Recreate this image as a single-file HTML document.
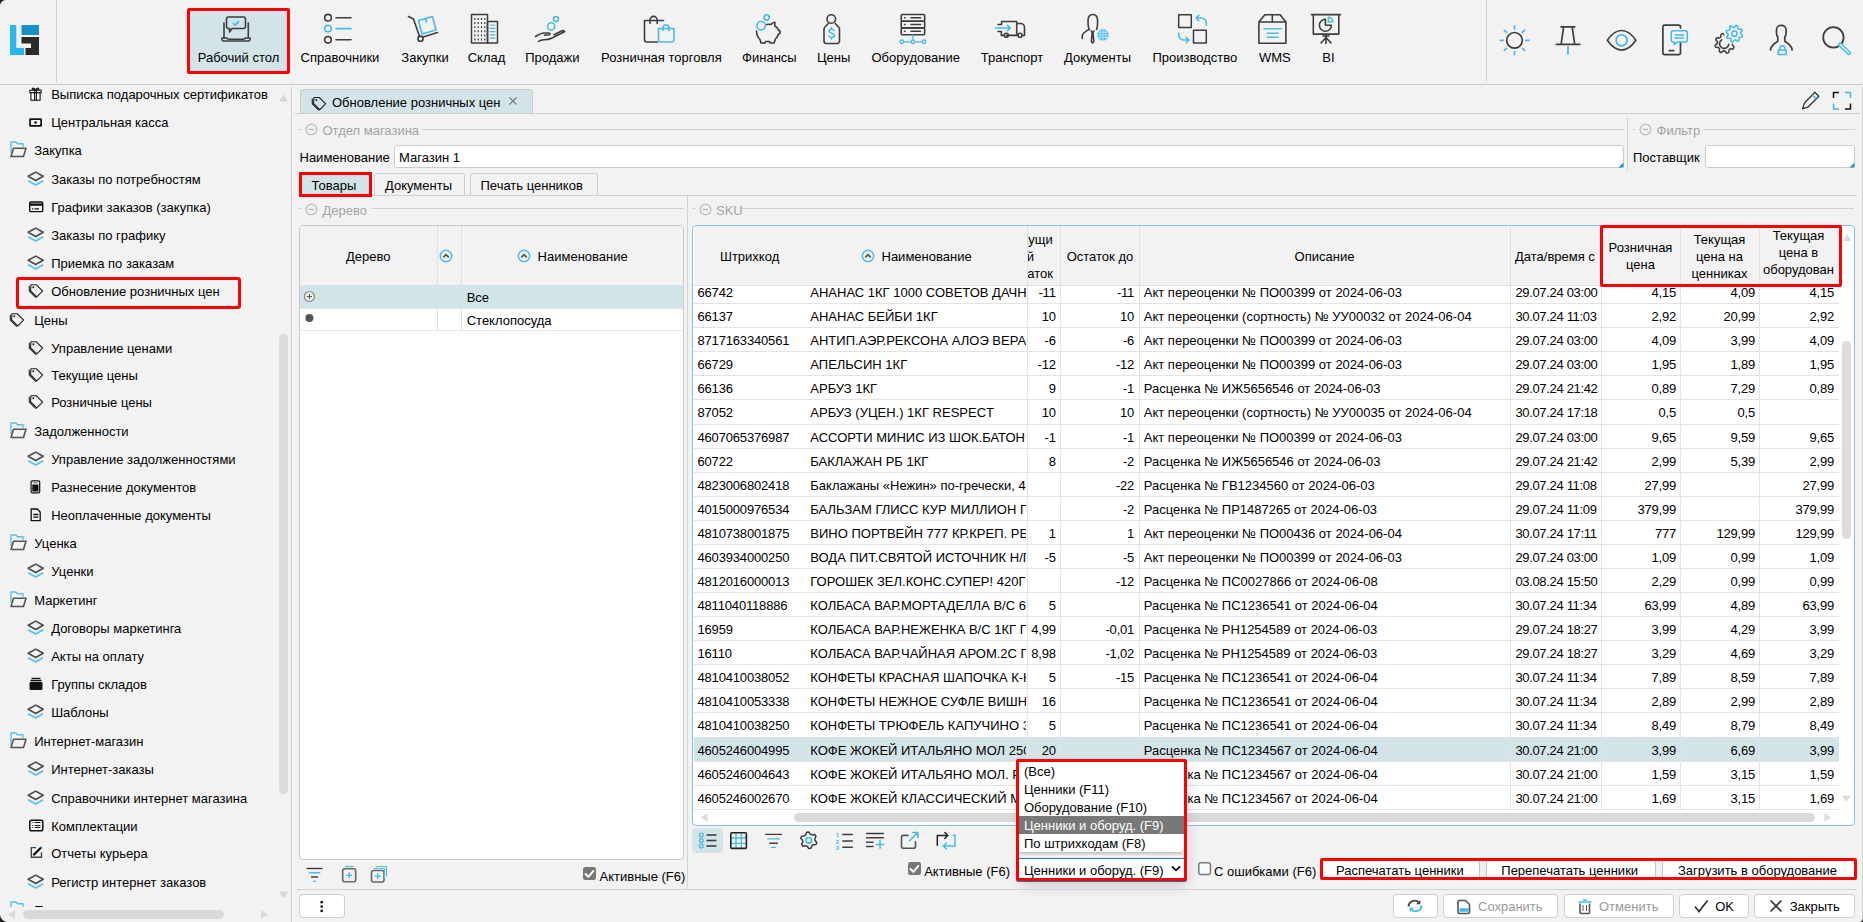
<!DOCTYPE html>
<html><head><meta charset="utf-8"><title>Обновление розничных цен</title>
<style>
html,body{margin:0;padding:0;}
body{width:1863px;height:922px;overflow:hidden;position:relative;background:#f2f2f2;font-family:"Liberation Sans",sans-serif;font-size:13px;color:#000;}
.a{position:absolute;}
.t{position:absolute;line-height:16px;white-space:nowrap;}
.g{color:#a3a3a3;}
.clip{position:absolute;overflow:hidden;}
svg{overflow:visible}
</style></head><body>

<div class="a" style="left:0;top:0;width:6px;height:6px;background:radial-gradient(circle at 6px 6px, rgba(34,34,34,0) 5.5px, #222 6.5px)"></div>
<svg class="a" style="left:0;top:0" width="56" height="84"><rect x="10" y="25" width="6.3" height="30" fill="#2bb5ee"/><rect x="10" y="48" width="14" height="7" fill="#2bb5ee"/><rect x="21.5" y="25" width="17.5" height="10" fill="#1a8fc7"/><rect x="21.5" y="37" width="17.5" height="6.5" fill="#2a2a2a"/><rect x="31" y="43" width="8" height="6" fill="#2a2a2a"/><rect x="25.5" y="48" width="13.5" height="7" fill="#2a2a2a"/></svg>
<div class="a" style="left:56px;top:0px;width:1px;height:82px;background:#cfcfcf"></div>
<div class="a" style="left:1486px;top:0px;width:1px;height:81px;background:#cfcfcf"></div>
<div class="a" style="left:0px;top:84px;width:1863px;height:1px;background:#cdcdcd"></div>
<div class="a" style="left:187px;top:8px;width:103px;height:66px;box-sizing:border-box;border:3px solid #ff0000;background:#d3e4e9;border-radius:2px"></div>
<div class="t " style="left:88.5px;top:50.0px;width:300px;text-align:center;">Рабочий стол</div>
<div class="t " style="left:190.0px;top:50.0px;width:300px;text-align:center;">Справочники</div>
<div class="t " style="left:275.0px;top:50.0px;width:300px;text-align:center;">Закупки</div>
<div class="t " style="left:336.5px;top:50.0px;width:300px;text-align:center;">Склад</div>
<div class="t " style="left:402.4px;top:50.0px;width:300px;text-align:center;">Продажи</div>
<div class="t " style="left:511.4px;top:50.0px;width:300px;text-align:center;">Розничная торговля</div>
<div class="t " style="left:619.4px;top:50.0px;width:300px;text-align:center;">Финансы</div>
<div class="t " style="left:683.6px;top:50.0px;width:300px;text-align:center;">Цены</div>
<div class="t " style="left:765.7px;top:50.0px;width:300px;text-align:center;">Оборудование</div>
<div class="t " style="left:862.0px;top:50.0px;width:300px;text-align:center;">Транспорт</div>
<div class="t " style="left:947.5px;top:50.0px;width:300px;text-align:center;">Документы</div>
<div class="t " style="left:1044.9px;top:50.0px;width:300px;text-align:center;">Производство</div>
<div class="t " style="left:1124.8px;top:50.0px;width:300px;text-align:center;">WMS</div>
<div class="t " style="left:1178.5px;top:50.0px;width:300px;text-align:center;">BI</div>
<svg class="a" style="left:0;top:0" width="1863" height="84" viewBox="0 0 1863 84" fill="none" stroke-linecap="round" stroke-linejoin="round"><path d="M224 23v14M248.3 23v14M222 38h4.5l2 1.3h15l2-1.3h4.5v1.5a1.5 1.5 0 0 1-1.5 1.5h-25a1.5 1.5 0 0 1-1.5-1.5z" stroke="#3d3d3d" stroke-width="1.6"/><path d="M228.5 17h15a2 2 0 0 1 2 2v7.5a2 2 0 0 1-2 2h-11.5l-2.5 3.5v-3.5h-1a2 2 0 0 1-2-2v-7.5a2 2 0 0 1 2-2z" stroke="#3d3d3d" stroke-width="1.6"/><path d="M233.3 23.3l2 1.8 3.3-3.5" stroke="#45b9ea" stroke-width="1.6"/><circle cx="328" cy="17.7" r="3.3" stroke="#3d3d3d" stroke-width="1.6"/><path d="M336 17.7h15" stroke="#3d3d3d" stroke-width="1.6"/><circle cx="328" cy="28.6" r="3.3" stroke="#45b9ea" stroke-width="1.6"/><path d="M336 28.6h15" stroke="#45b9ea" stroke-width="1.6"/><circle cx="328" cy="39.8" r="3.3" stroke="#3d3d3d" stroke-width="1.6"/><path d="M336 39.8h15" stroke="#3d3d3d" stroke-width="1.6"/><path d="M408.5 16.5l5 2.5 6 17.5M423 37l14.5-4.5" stroke="#3d3d3d" stroke-width="1.6"/><circle cx="420.5" cy="38.7" r="2.6" stroke="#3d3d3d" stroke-width="1.6"/><path d="M418.5 20.5l14-4 3.5 13.5-14 4z" stroke="#45b9ea" stroke-width="1.6"/><path d="M425.5 18.5l1 3.5" stroke="#45b9ea" stroke-width="1.6"/><rect x="471.5" y="14.5" width="16" height="28.5" stroke="#3d3d3d" stroke-width="1.5"/><rect x="487.5" y="21.5" width="10" height="21.5" stroke="#3d3d3d" stroke-width="1.5"/><rect x="474.3" y="18.0" width="1.2" height="2" fill="#3d3d3d"/><rect x="477.6" y="18.0" width="1.2" height="2" fill="#3d3d3d"/><rect x="480.9" y="18.0" width="1.2" height="2" fill="#3d3d3d"/><rect x="484.2" y="18.0" width="1.2" height="2" fill="#3d3d3d"/><rect x="474.3" y="22.1" width="1.2" height="2" fill="#3d3d3d"/><rect x="477.6" y="22.1" width="1.2" height="2" fill="#3d3d3d"/><rect x="480.9" y="22.1" width="1.2" height="2" fill="#3d3d3d"/><rect x="484.2" y="22.1" width="1.2" height="2" fill="#3d3d3d"/><rect x="474.3" y="26.2" width="1.2" height="2" fill="#3d3d3d"/><rect x="477.6" y="26.2" width="1.2" height="2" fill="#3d3d3d"/><rect x="480.9" y="26.2" width="1.2" height="2" fill="#3d3d3d"/><rect x="484.2" y="26.2" width="1.2" height="2" fill="#3d3d3d"/><rect x="474.3" y="30.3" width="1.2" height="2" fill="#3d3d3d"/><rect x="477.6" y="30.3" width="1.2" height="2" fill="#3d3d3d"/><rect x="480.9" y="30.3" width="1.2" height="2" fill="#3d3d3d"/><rect x="484.2" y="30.3" width="1.2" height="2" fill="#3d3d3d"/><rect x="474.3" y="34.4" width="1.2" height="2" fill="#3d3d3d"/><rect x="477.6" y="34.4" width="1.2" height="2" fill="#3d3d3d"/><rect x="480.9" y="34.4" width="1.2" height="2" fill="#3d3d3d"/><rect x="484.2" y="34.4" width="1.2" height="2" fill="#3d3d3d"/><rect x="474.3" y="38.5" width="1.2" height="2" fill="#3d3d3d"/><rect x="477.6" y="38.5" width="1.2" height="2" fill="#3d3d3d"/><rect x="480.9" y="38.5" width="1.2" height="2" fill="#3d3d3d"/><rect x="484.2" y="38.5" width="1.2" height="2" fill="#3d3d3d"/><path d="M490 25.0h5" stroke="#45b9ea" stroke-width="1.2"/><path d="M490 28.3h5" stroke="#45b9ea" stroke-width="1.2"/><path d="M490 31.6h5" stroke="#45b9ea" stroke-width="1.2"/><path d="M490 34.9h5" stroke="#45b9ea" stroke-width="1.2"/><path d="M490 38.2h5" stroke="#45b9ea" stroke-width="1.2"/><circle cx="551.1" cy="26.4" r="3.6" stroke="#45b9ea" stroke-width="1.6"/><circle cx="556" cy="19" r="2.5" stroke="#45b9ea" stroke-width="1.6"/><path d="M535.5 36.5c3-2 6-3.5 9-3.5h4.5c1.2 0 1.5 1.5 0 1.8l-4.5 .5M538.5 41.5c1.5-1.5 3-1.8 5.5-1.8 3 0 5 0 7.5-1.5l13-6.5c-.5-1-2-1.2-3.5-.5l-7 3.5" stroke="#3d3d3d" stroke-width="1.6"/><path d="M657.5 42h-10.5a2.5 2.5 0 0 1-2.5-2.5v-19h19" stroke="#3d3d3d" stroke-width="1.6"/><path d="M650 23.5v-3.5a3.6 3.6 0 0 1 7.2 0v3.5" stroke="#3d3d3d" stroke-width="1.6"/><path d="M658.5 28.5h15.5v11a2.5 2.5 0 0 1-2.5 2.5h-10.5a2.5 2.5 0 0 1-2.5-2.5z" stroke="#45b9ea" stroke-width="1.6"/><path d="M663 30.5v-2.5a3 3 0 0 1 6 0v2.5" stroke="#45b9ea" stroke-width="1.6"/><circle cx="761.1" cy="25.7" r="4.2" stroke="#45b9ea" stroke-width="1.6"/><circle cx="766.6" cy="17.4" r="2.6" stroke="#45b9ea" stroke-width="1.6"/><path d="M756.5 31c0 4 1.5 6.5 3.5 8.5l1 3.5h4l.5-1.5h4l.5 1.5h4l1.5-4c1.5-1.5 2.5-3 3-5l1.5-.5v-2.5l-1.5-1c-.7-2-2-3.3-3.8-4.3l.2-3.5c-1.5 0-3 1-4 2.3-1.5-.3-3-.3-4.2 0" stroke="#3d3d3d" stroke-width="1.6"/><path d="M828.3 23.5l-3.3 3.5a3 3 0 0 0-1 2.2v11.8a2.5 2.5 0 0 0 2.5 2.5h10.5a2.5 2.5 0 0 0 2.5-2.5v-11.8a3 3 0 0 0-1-2.2l-3.3-3.5" stroke="#3d3d3d" stroke-width="1.6"/><circle cx="831.3" cy="19" r="4.3" stroke="#3d3d3d" stroke-width="1.6"/><path d="M834 30.5c-.5-1-1.5-1.3-2.5-1.3-1.5 0-2.5.8-2.5 1.9 0 2.6 5.3 1.5 5.3 4.3 0 1.1-1.1 2-2.7 2-1.2 0-2.2-.5-2.7-1.4M831.5 27.5v1.7M831.5 37.4v1.7" stroke="#45b9ea" stroke-width="1.5"/><rect x="901.2" y="14.5" width="23.5" height="6.7" rx="1.2" stroke="#3d3d3d" stroke-width="1.6"/><path d="M904.5 17.85h.6M911 17.85h9.5" stroke="#3d3d3d" stroke-width="1.5"/><rect x="901.2" y="21.2" width="23.5" height="6.7" rx="1.2" stroke="#3d3d3d" stroke-width="1.6"/><path d="M904.5 24.55h.6M911 24.55h9.5" stroke="#3d3d3d" stroke-width="1.5"/><rect x="901.2" y="28" width="23.5" height="6.7" rx="1.2" stroke="#3d3d3d" stroke-width="1.6"/><path d="M904.5 31.35h.6M911 31.35h9.5" stroke="#3d3d3d" stroke-width="1.5"/><path d="M903.8 41.8h6.6M915.4 41.8h6.6M912.9 35v4.3" stroke="#45b9ea" stroke-width="1.3"/><circle cx="901.8" cy="41.8" r="1.8" stroke="#45b9ea" stroke-width="1.3"/><circle cx="912.9" cy="41.8" r="1.8" stroke="#45b9ea" stroke-width="1.3"/><circle cx="924" cy="41.8" r="1.8" stroke="#45b9ea" stroke-width="1.3"/><path d="M998 24.5h3.6v-3h15.1v14h-10.2M1004.3 35.4h-3v-3.5M998 31.5h3.3M1016.7 23.5h3.8a4 4 0 0 1 4 4v8h-2.4M1018 35.4h-9.3" stroke="#3d3d3d" stroke-width="1.6"/><circle cx="1006.3" cy="35.3" r="2" stroke="#3d3d3d" stroke-width="1.6"/><circle cx="1020" cy="35.3" r="2" stroke="#3d3d3d" stroke-width="1.6"/><path d="M995.3 28h15M1007.5 25.3l2.8 2.7-2.8 2.7" stroke="#45b9ea" stroke-width="1.7"/><path d="M1089.5 29.5c-1.5-1.2-1.5-4-1.5-8.5 0-4 2-6.5 4.8-6.5s4.8 2.5 4.8 6.5c0 4.5 0 6.5-1 8.5M1089 29.3c-3.5 2-6.7 3.8-6.7 6.3v3M1091.3 31l.9 1.5-.8 9 1.2 1.5 1.2-1.5-.8-9 .9-1.5" stroke="#3d3d3d" stroke-width="1.6"/><circle cx="1103" cy="34.8" r="5.8" fill="#45b9ea"/><path d="M1097.2 34.8h11.6M1103 29v11.6M1100.2 29.8v10M1105.8 29.8v10M1098 32.2h10M1098 37.4h10" stroke="#dff3fc" stroke-width=".7"/><rect x="1178.7" y="14.8" width="12.6" height="12.6" stroke="#3d3d3d" stroke-width="1.5"/><rect x="1193.5" y="30.2" width="12.8" height="12.8" stroke="#3d3d3d" stroke-width="1.5"/><path d="M1206.3 25v-2a5 5 0 0 0-5-5h-5M1198.8 15.3l-2.7 2.7 2.7 2.7M1178.7 33v2a5 5 0 0 0 5 5h5M1186.2 42.7l2.7-2.7-2.7-2.7" stroke="#45b9ea" stroke-width="1.6"/><path d="M1259 22h27M1264.8 14.7h15.3l5.8 7.3v21.3h-27v-21.3z" stroke="#3d3d3d" stroke-width="1.6"/><path d="M1272.3 14.7v7.3" stroke="#3d3d3d" stroke-width="1.5"/><path d="M1264 28.8h17.5M1267.2 33.3h11M1267.2 37.2h11" stroke="#45b9ea" stroke-width="1.5"/><path d="M1311.5 14.6h29M1313.3 14.6v19.5h25.5v-19.5M1326 35.5v8M1326 37.5l-5 5.5M1326 37.5l5 5.5M1323 36h6" stroke="#3d3d3d" stroke-width="1.6"/><path d="M1325.4 19.3a6 6 0 1 0 6 6h-6z" stroke="#3d3d3d" stroke-width="1.6"/><path d="M1328.3 17.2a5 5 0 0 1 4.6 4.6h-4.6z" stroke="#45b9ea" stroke-width="1.5"/><circle cx="1514.5" cy="40.3" r="7.8" stroke="#3d3d3d" stroke-width="1.7"/><path d="M1525.80 40.30L1528.80 40.30M1522.49 48.29L1524.61 50.41M1514.50 51.60L1514.50 54.60M1506.51 48.29L1504.39 50.41M1503.20 40.30L1500.20 40.30M1506.51 32.31L1504.39 30.19M1514.50 29.00L1514.50 26.00M1522.49 32.31L1524.61 30.19" stroke="#45b9ea" stroke-width="1.7"/><path d="M1561 26.8h13.8M1563.6 26.8l-2.5 17.5M1572.2 26.8l2.5 17.5M1556.3 44.3h23.5" stroke="#3d3d3d" stroke-width="1.7"/><path d="M1568 46.8v7" stroke="#45b9ea" stroke-width="1.8"/><path d="M1607.3 40.3c3.8-5.5 8.8-9.8 14.3-9.8s10.5 4.3 14.3 9.8c-3.8 5.5-8.8 9.8-14.3 9.8s-10.5-4.3-14.3-9.8z" stroke="#3d3d3d" stroke-width="1.7"/><circle cx="1621.6" cy="40.3" r="5.5" stroke="#45b9ea" stroke-width="1.8"/><path d="M1680.5 28v-1a1.8 1.8 0 0 0-1.8-1.8h-14a1.8 1.8 0 0 0-1.8 1.8v25.8a1.8 1.8 0 0 0 1.8 1.8h14a1.8 1.8 0 0 0 1.8-1.8v-10.5M1669.3 50.7h4.3" stroke="#3d3d3d" stroke-width="1.7"/><path d="M1673 30.7h12.5a1.8 1.8 0 0 1 1.8 1.8v7.6a1.8 1.8 0 0 1-1.8 1.8h-8.3l-3 2.7v-2.7h-1.2a1.8 1.8 0 0 1-1.8-1.8v-7.6a1.8 1.8 0 0 1 1.8-1.8zM1675 35h8.5M1675 38h8.5" stroke="#45b9ea" stroke-width="1.5"/><path d="M1732.35 44.91L1734.12 47.26L1733.19 48.99L1730.25 48.79L1729.10 49.73L1728.69 52.65L1726.82 53.21L1724.87 51.00L1723.39 50.85L1721.04 52.62L1719.31 51.69L1719.51 48.75L1718.57 47.60L1715.65 47.19L1715.09 45.32L1717.30 43.37L1717.45 41.89L1715.68 39.54L1716.61 37.81L1719.55 38.01L1720.70 37.07L1721.11 34.15L1722.98 33.59L1724.93 35.80L1726.41 35.95L1728.76 34.18L1730.49 35.11L1730.29 38.05L1731.23 39.20L1734.15 39.61L1734.71 41.48L1732.50 43.43Z" stroke="#3d3d3d" stroke-width="1.5"/><path d="M1721.8 39.8a4.6 4.6 0 1 0 6.9 4.5" stroke="#3d3d3d" stroke-width="1.6"/><circle cx="1734.4" cy="33.7" r="10.3" fill="#f2f2f2" stroke="none"/><path d="M1740.70 33.70L1742.64 35.34L1742.16 36.91L1739.64 37.20L1738.85 38.15L1739.07 40.68L1737.61 41.46L1735.63 39.88L1734.40 40.00L1732.76 41.94L1731.19 41.46L1730.90 38.94L1729.95 38.15L1727.42 38.37L1726.64 36.91L1728.22 34.93L1728.10 33.70L1726.16 32.06L1726.64 30.49L1729.16 30.20L1729.95 29.25L1729.73 26.72L1731.19 25.94L1733.17 27.52L1734.40 27.40L1736.04 25.46L1737.61 25.94L1737.90 28.46L1738.85 29.25L1741.38 29.03L1742.16 30.49L1740.58 32.47Z" stroke="#45b9ea" stroke-width="1.5"/><circle cx="1734.4" cy="33.7" r="2.6" stroke="#45b9ea" stroke-width="1.5"/><path d="M1770.5 50c0-3.5 2.5-5.8 7.3-8.8v-4.3c-1-1-1.3-2.5-1.3-4.5v-2.5c0-2.8 2.2-4.6 4.8-4.6s4.8 1.8 4.8 4.6v2.5c0 2-.3 3.5-1.3 4.5v4.3c4.8 3 7.3 5.3 7.3 8.8" stroke="#3d3d3d" stroke-width="1.7"/><rect x="1778.3" y="50" width="8" height="4.5" stroke="#45b9ea" stroke-width="1.5"/><path d="M1779.8 50v-1.8a2.5 2.5 0 0 1 5 0v1.8" stroke="#45b9ea" stroke-width="1.5"/><circle cx="1833.4" cy="37.4" r="10.2" stroke="#3d3d3d" stroke-width="1.8"/><path d="M1840 44.6l9 8.5" stroke="#45b9ea" stroke-width="4.2"/><path d="M1840 44.6l9 8.5" stroke="#f2f2f2" stroke-width="1.4"/></svg>
<div class="clip" style="left:0;top:85px;width:278px;height:821.5px">
<div class="t" style="left:51.2px;top:2.0px">Выписка подарочных сертификатов</div>
<div class="t" style="left:51.2px;top:30.0px">Центральная касса</div>
<div class="t" style="left:34.2px;top:58.0px">Закупка</div>
<div class="t" style="left:51.2px;top:87.0px">Заказы по потребностям</div>
<div class="t" style="left:51.2px;top:115.0px">Графики заказов (закупка)</div>
<div class="t" style="left:51.2px;top:143.0px">Заказы по графику</div>
<div class="t" style="left:51.2px;top:171.0px">Приемка по заказам</div>
<div class="t" style="left:51.2px;top:199.0px">Обновление розничных цен</div>
<div class="t" style="left:34.2px;top:228.0px">Цены</div>
<div class="t" style="left:51.2px;top:256.0px">Управление ценами</div>
<div class="t" style="left:51.2px;top:283.0px">Текущие цены</div>
<div class="t" style="left:51.2px;top:310.0px">Розничные цены</div>
<div class="t" style="left:34.2px;top:339.0px">Задолженности</div>
<div class="t" style="left:51.2px;top:367.0px">Управление задолженностями</div>
<div class="t" style="left:51.2px;top:395.0px">Разнесение документов</div>
<div class="t" style="left:51.2px;top:423.0px">Неоплаченные документы</div>
<div class="t" style="left:34.2px;top:451.0px">Уценка</div>
<div class="t" style="left:51.2px;top:479.0px">Уценки</div>
<div class="t" style="left:34.2px;top:508.0px">Маркетинг</div>
<div class="t" style="left:51.2px;top:536.0px">Договоры маркетинга</div>
<div class="t" style="left:51.2px;top:564.0px">Акты на оплату</div>
<div class="t" style="left:51.2px;top:592.0px">Группы складов</div>
<div class="t" style="left:51.2px;top:620.0px">Шаблоны</div>
<div class="t" style="left:34.2px;top:649.0px">Интернет-магазин</div>
<div class="t" style="left:51.2px;top:677.0px">Интернет-заказы</div>
<div class="t" style="left:51.2px;top:706.0px">Справочники интернет магазина</div>
<div class="t" style="left:51.2px;top:734.0px">Комплектации</div>
<div class="t" style="left:51.2px;top:761.0px">Отчеты курьера</div>
<div class="t" style="left:51.2px;top:790.0px">Регистр интернет заказов</div>
<div class="t" style="left:34.2px;top:818.0px">Продажи</div>
<svg class="a" style="left:0;top:0" width="278" height="840"><g transform="translate(29,2.3000000000000007)" stroke="#111" stroke-width="1.1" fill="none"><rect x="0.9" y="2.9" width="11.2" height="2.6" fill="#fff"/><rect x="1.9" y="5.5" width="9.2" height="7.4" fill="#fff"/><path d="M5.6 2.9v10M7.4 2.9v10M6.5 2.6c-.8-1.9-3.3-2.4-3.3-.9 0 .7.8.9 3.3.9M6.5 2.6c.8-1.9 3.3-2.4 3.3-.9 0 .7-.8.9-3.3.9"/></g><g transform="translate(29,33.3)"><rect x="0.2" y="0" width="12.8" height="8.4" fill="#111" rx="1.2"/><path d="M2 1.6h9.2q-.6 2.6 .8 2.6-1.4 0-.8 2.6h-9.2q.6-2.6-.8-2.6 1.4 0 .8-2.6z" fill="#f4f4f4"/><circle cx="6.6" cy="4.2" r="1.3" fill="#111"/></g><g transform="translate(10,55.8)" fill="none" stroke-linejoin="round"><path d="M1 12V1.2h5l1.5 1.8h5.5V6" stroke="#55c2ee" stroke-width="1.4"/><path d="M3.5 7.5h12.5l-2.5 8.2h-12.5z" stroke="#555" stroke-width="1.6"/></g><g transform="translate(27.2,86.3)" fill="none" stroke-linejoin="round"><path d="M8.5 0.8l7.5 4.2-7.5 4.2-7.5-4.2z" stroke="#4a4a4a" stroke-width="1.6"/><path d="M1 9.5l7.5 4.2 7.5-4.2" stroke="#55c2ee" stroke-width="1.8"/></g><g transform="translate(29,116.3)" fill="none"><rect x="0.7" y="0.7" width="13" height="9.6" rx="1.2" stroke="#111" stroke-width="1.4"/><path d="M0.7 3.3h13" stroke="#111" stroke-width="2.4"/><path d="M3 7.6h1.3M5.5 7.6h4.5" stroke="#111" stroke-width="1.1"/></g><g transform="translate(27.2,142.3)" fill="none" stroke-linejoin="round"><path d="M8.5 0.8l7.5 4.2-7.5 4.2-7.5-4.2z" stroke="#4a4a4a" stroke-width="1.6"/><path d="M1 9.5l7.5 4.2 7.5-4.2" stroke="#55c2ee" stroke-width="1.8"/></g><g transform="translate(27.2,170.3)" fill="none" stroke-linejoin="round"><path d="M8.5 0.8l7.5 4.2-7.5 4.2-7.5-4.2z" stroke="#4a4a4a" stroke-width="1.6"/><path d="M1 9.5l7.5 4.2 7.5-4.2" stroke="#55c2ee" stroke-width="1.8"/></g><g transform="translate(28,198.3)" fill="none" stroke="#222" stroke-width="1.1" stroke-linejoin="miter"><path d="M3 1.5h5.3l6.3 6.3-5.8 5.8-6.3-6.3z"/><path d="M1.3 2.5v5.2l6.6 6.6"/><circle cx="5.3" cy="3.9" r="1" fill="#222" stroke="none"/></g><g transform="translate(9,227.3)" fill="none" stroke="#222" stroke-width="1.1" stroke-linejoin="miter"><path d="M3 1.5h5.3l6.3 6.3-5.8 5.8-6.3-6.3z"/><path d="M1.3 2.5v5.2l6.6 6.6"/><circle cx="5.3" cy="3.9" r="1" fill="#222" stroke="none"/></g><g transform="translate(28,255.3)" fill="none" stroke="#222" stroke-width="1.1" stroke-linejoin="miter"><path d="M3 1.5h5.3l6.3 6.3-5.8 5.8-6.3-6.3z"/><path d="M1.3 2.5v5.2l6.6 6.6"/><circle cx="5.3" cy="3.9" r="1" fill="#222" stroke="none"/></g><g transform="translate(28,282.3)" fill="none" stroke="#222" stroke-width="1.1" stroke-linejoin="miter"><path d="M3 1.5h5.3l6.3 6.3-5.8 5.8-6.3-6.3z"/><path d="M1.3 2.5v5.2l6.6 6.6"/><circle cx="5.3" cy="3.9" r="1" fill="#222" stroke="none"/></g><g transform="translate(28,309.3)" fill="none" stroke="#222" stroke-width="1.1" stroke-linejoin="miter"><path d="M3 1.5h5.3l6.3 6.3-5.8 5.8-6.3-6.3z"/><path d="M1.3 2.5v5.2l6.6 6.6"/><circle cx="5.3" cy="3.9" r="1" fill="#222" stroke="none"/></g><g transform="translate(10,336.8)" fill="none" stroke-linejoin="round"><path d="M1 12V1.2h5l1.5 1.8h5.5V6" stroke="#55c2ee" stroke-width="1.4"/><path d="M3.5 7.5h12.5l-2.5 8.2h-12.5z" stroke="#555" stroke-width="1.6"/></g><g transform="translate(27.2,366.3)" fill="none" stroke-linejoin="round"><path d="M8.5 0.8l7.5 4.2-7.5 4.2-7.5-4.2z" stroke="#4a4a4a" stroke-width="1.6"/><path d="M1 9.5l7.5 4.2 7.5-4.2" stroke="#55c2ee" stroke-width="1.8"/></g><g transform="translate(30.5,395.3)"><rect x="0.6" y="0.6" width="8.6" height="12" rx="1.2" fill="#fff" stroke="#111" stroke-width="1.2"/><path d="M2.2 2.6h5.4" stroke="#777" stroke-width="1"/><rect x="1.8" y="4.2" width="6.2" height="7" fill="#111"/></g><g transform="translate(30.5,423.3)" fill="none" stroke="#111" stroke-width="1.3"><path d="M0.7 0.7h6l3 3v8.6h-9z"/><path d="M2.8 6.2h5M2.8 8.8h5"/></g><g transform="translate(10,448.8)" fill="none" stroke-linejoin="round"><path d="M1 12V1.2h5l1.5 1.8h5.5V6" stroke="#55c2ee" stroke-width="1.4"/><path d="M3.5 7.5h12.5l-2.5 8.2h-12.5z" stroke="#555" stroke-width="1.6"/></g><g transform="translate(27.2,478.3)" fill="none" stroke-linejoin="round"><path d="M8.5 0.8l7.5 4.2-7.5 4.2-7.5-4.2z" stroke="#4a4a4a" stroke-width="1.6"/><path d="M1 9.5l7.5 4.2 7.5-4.2" stroke="#55c2ee" stroke-width="1.8"/></g><g transform="translate(10,505.79999999999995)" fill="none" stroke-linejoin="round"><path d="M1 12V1.2h5l1.5 1.8h5.5V6" stroke="#55c2ee" stroke-width="1.4"/><path d="M3.5 7.5h12.5l-2.5 8.2h-12.5z" stroke="#555" stroke-width="1.6"/></g><g transform="translate(27.2,535.3)" fill="none" stroke-linejoin="round"><path d="M8.5 0.8l7.5 4.2-7.5 4.2-7.5-4.2z" stroke="#4a4a4a" stroke-width="1.6"/><path d="M1 9.5l7.5 4.2 7.5-4.2" stroke="#55c2ee" stroke-width="1.8"/></g><g transform="translate(27.2,563.3)" fill="none" stroke-linejoin="round"><path d="M8.5 0.8l7.5 4.2-7.5 4.2-7.5-4.2z" stroke="#4a4a4a" stroke-width="1.6"/><path d="M1 9.5l7.5 4.2 7.5-4.2" stroke="#55c2ee" stroke-width="1.8"/></g><g transform="translate(29,592.8)"><rect x="2.5" y="0" width="9" height="1.3" fill="#111"/><rect x="1.5" y="2" width="11" height="1.3" fill="#111"/><rect x="0.5" y="4" width="13" height="8.2" rx="1.5" fill="#111"/></g><g transform="translate(27.2,619.3)" fill="none" stroke-linejoin="round"><path d="M8.5 0.8l7.5 4.2-7.5 4.2-7.5-4.2z" stroke="#4a4a4a" stroke-width="1.6"/><path d="M1 9.5l7.5 4.2 7.5-4.2" stroke="#55c2ee" stroke-width="1.8"/></g><g transform="translate(10,646.8)" fill="none" stroke-linejoin="round"><path d="M1 12V1.2h5l1.5 1.8h5.5V6" stroke="#55c2ee" stroke-width="1.4"/><path d="M3.5 7.5h12.5l-2.5 8.2h-12.5z" stroke="#555" stroke-width="1.6"/></g><g transform="translate(27.2,676.3)" fill="none" stroke-linejoin="round"><path d="M8.5 0.8l7.5 4.2-7.5 4.2-7.5-4.2z" stroke="#4a4a4a" stroke-width="1.6"/><path d="M1 9.5l7.5 4.2 7.5-4.2" stroke="#55c2ee" stroke-width="1.8"/></g><g transform="translate(27.2,705.3)" fill="none" stroke-linejoin="round"><path d="M8.5 0.8l7.5 4.2-7.5 4.2-7.5-4.2z" stroke="#4a4a4a" stroke-width="1.6"/><path d="M1 9.5l7.5 4.2 7.5-4.2" stroke="#55c2ee" stroke-width="1.8"/></g><g transform="translate(29,734.5)" fill="none" stroke="#111"><rect x="0.8" y="0.8" width="13" height="10.4" rx="1.8" stroke-width="1.5"/><path d="M3.4 3h.9M5.8 3h5.6M3.4 6h.9M5.8 6h5.6M3.4 8h.9M5.8 8h5.6" stroke-width="1.1"/></g><g transform="translate(30.5,760.8)" fill="none" stroke="#111"><path d="M5.5 1.8h-4.7v9.7h10.2v-5" stroke-width="1.4" stroke="#444"/><path d="M2.8 9.5l7.8-7.8" stroke-width="2.2"/><path d="M10 2.3l1.2-1.2" stroke-width="2" stroke="#1a6fb0"/></g><g transform="translate(27.2,789.3)" fill="none" stroke-linejoin="round"><path d="M8.5 0.8l7.5 4.2-7.5 4.2-7.5-4.2z" stroke="#4a4a4a" stroke-width="1.6"/><path d="M1 9.5l7.5 4.2 7.5-4.2" stroke="#55c2ee" stroke-width="1.8"/></g><g transform="translate(10,815.8)" fill="none" stroke-linejoin="round"><path d="M1 12V1.2h5l1.5 1.8h5.5V6" stroke="#55c2ee" stroke-width="1.4"/><path d="M3.5 7.5h12.5l-2.5 8.2h-12.5z" stroke="#555" stroke-width="1.6"/></g></svg>
</div>
<div class="a" style="left:16px;top:277px;width:225px;height:32px;box-sizing:border-box;border:3px solid #ff0000;border-radius:3px"></div>
<svg class="a" style="left:270px;top:85px" width="22" height="837"><path d="M283.5 9.5l4.5 7h-9z" transform="translate(-270,0)" fill="#d6d6d6"/><path d="M283.5 813.5l4.5-7h-9z" transform="translate(-270,0)" fill="#d6d6d6"/></svg>
<div class="a" style="left:279px;top:334px;width:9px;height:460px;background:#dcdcdc;border-radius:4.5px"></div>
<div class="a" style="left:23px;top:910px;width:201px;height:9px;background:#d9d9d9;border-radius:4.5px"></div>
<svg class="a" style="left:0;top:900px" width="292" height="22"><path d="M8 14.4l7-4.5v9z" fill="#dcdcdc"/><path d="M268 14.4l-7-4.5v9z" fill="#dcdcdc"/></svg>
<div class="a" style="left:0;top:914px;width:8px;height:8px;background:radial-gradient(circle at 8px 0px, rgba(34,34,34,0) 7.5px, #222 8.5px)"></div>
<div class="a" style="left:1859px;top:918px;width:4px;height:4px;background:radial-gradient(circle at 0px 0px, rgba(34,34,34,0) 3.5px, #222 4.5px);z-index:5"></div>
<div class="a" style="left:291px;top:87px;width:1px;height:835px;background:#cfcfcf"></div>
<div class="a" style="left:300px;top:89px;width:233px;height:24px;box-sizing:border-box;background:#d3e4e9;border:1px solid #cdcdcd;border-bottom:none;border-radius:3px 3px 0 0"></div>
<svg class="a" style="left:308px;top:93px" width="22" height="20" fill="none"><g stroke="#222" stroke-width="1.1" stroke-linejoin="miter"><path d="M6 4.5h5.3l6.3 6.3-5.8 5.8-6.3-6.3z"/><path d="M4.3 5.5v5.2l6.6 6.6"/><circle cx="8.3" cy="6.9" r="1" fill="#222" stroke="none"/></g></svg>
<div class="a" style="left:295px;top:113px;width:1565px;height:1px;background:#cdcdcd"></div>
<div class="a" style="left:1862px;top:87px;width:1px;height:835px;background:#d0d0d0"></div>
<div class="t " style="left:332.0px;top:95.0px;">Обновление розничных цен</div>
<svg class="a" style="left:508px;top:96px" width="10" height="10"><path d="M1.5 1.5l7 7M8.5 1.5l-7 7" stroke="#777" stroke-width="1.1"/></svg>
<svg class="a" style="left:1800px;top:90px" width="56" height="22" fill="none" stroke-linejoin="round"><path d="M14.8 2.3l4 4-10.5 10.5-5.8 2 2-5.8z" stroke="#333" stroke-width="1.3"/><path d="M12.2 4.9l4 4" stroke="#45b9ea" stroke-width="1.5"/><path d="M33.5 8v-5.5h5.5M50.5 13.5v5.5h-5.5" stroke="#111" stroke-width="1.5"/><path d="M45 2.5h5.5v5.5M39 19h-5.5v-5.5" stroke="#45b9ea" stroke-width="1.5"/></svg>
<div class="a" style="left:299px;top:129px;width:2px;height:1px;background:#c9c9c9"></div>
<svg class="a" style="left:305px;top:123px" width="13" height="13"><circle cx="6.5" cy="6.5" r="5.3" fill="none" stroke="#c4c4c4" stroke-width="1.6"/><path d="M3.9 6.5h5.2" stroke="#b8b8b8" stroke-width="1.4"/></svg>
<div class="t g" style="left:322.5px;top:123.0px;">Отдел магазина</div>
<div class="a" style="left:421.5px;top:129px;width:1202.5px;height:1px;background:#d3d3d3"></div>
<div class="a" style="left:1633px;top:129px;width:2px;height:1px;background:#c9c9c9"></div>
<svg class="a" style="left:1639px;top:123px" width="13" height="13"><circle cx="6.5" cy="6.5" r="5.3" fill="none" stroke="#c4c4c4" stroke-width="1.6"/><path d="M3.9 6.5h5.2" stroke="#b8b8b8" stroke-width="1.4"/></svg>
<div class="t g" style="left:1656.5px;top:123.0px;">Фильтр</div>
<div class="a" style="left:1703px;top:129px;width:152px;height:1px;background:#d3d3d3"></div>
<div class="a" style="left:1627px;top:117px;width:1px;height:54px;background:#d3d3d3"></div>
<div class="t " style="left:299.5px;top:150.0px;">Наименование</div>
<div class="a" style="left:394px;top:145px;width:1230px;height:23px;box-sizing:border-box;background:#fff;border:1px solid #cbcbcb;border-radius:3px"></div>
<svg class="a" style="left:1618px;top:162px" width="6" height="6"><path d="M5.5 0.5v5h-5z" fill="#1f8fc7"/></svg>
<div class="t " style="left:399.0px;top:150.0px;">Магазин 1</div>
<div class="t " style="left:1633.0px;top:150.0px;">Поставщик</div>
<div class="a" style="left:1705px;top:145px;width:150px;height:23px;box-sizing:border-box;background:#fff;border:1px solid #cbcbcb;border-radius:3px"></div>
<svg class="a" style="left:1849px;top:162px" width="6" height="6"><path d="M5.5 0.5v5h-5z" fill="#1f8fc7"/></svg>
<div class="a" style="left:299px;top:172px;width:73px;height:25px;box-sizing:border-box;border:3px solid #ff0000;background:#d3e4e9"></div>
<div class="t " style="left:311.5px;top:178.0px;">Товары</div>
<div class="a" style="left:373.5px;top:173px;width:91px;height:23px;box-sizing:border-box;border:1px solid #d0d0d0;border-bottom:none;border-radius:3px 3px 0 0"></div>
<div class="t " style="left:385.0px;top:178.0px;">Документы</div>
<div class="a" style="left:469.5px;top:173px;width:128px;height:23px;box-sizing:border-box;border:1px solid #d0d0d0;border-bottom:none;border-radius:3px 3px 0 0"></div>
<div class="t " style="left:480.5px;top:178.0px;">Печать ценников</div>
<div class="a" style="left:372px;top:195px;width:1485px;height:1px;background:#d0d0d0"></div>
<div class="a" style="left:687px;top:196px;width:1px;height:693px;background:#d3d3d3"></div>
<div class="a" style="left:299px;top:208px;width:2px;height:1px;background:#c9c9c9"></div>
<svg class="a" style="left:305px;top:202.5px" width="13" height="13"><circle cx="6.5" cy="6.5" r="5.3" fill="none" stroke="#c4c4c4" stroke-width="1.6"/><path d="M3.9 6.5h5.2" stroke="#b8b8b8" stroke-width="1.4"/></svg>
<div class="t g" style="left:322.5px;top:203.0px;">Дерево</div>
<div class="a" style="left:371.4px;top:208px;width:312.6px;height:1px;background:#d3d3d3"></div>
<div class="a" style="left:692.5px;top:208px;width:2px;height:1px;background:#c9c9c9"></div>
<svg class="a" style="left:698.5px;top:202.5px" width="13" height="13"><circle cx="6.5" cy="6.5" r="5.3" fill="none" stroke="#c4c4c4" stroke-width="1.6"/><path d="M3.9 6.5h5.2" stroke="#b8b8b8" stroke-width="1.4"/></svg>
<div class="t g" style="left:716.0px;top:203.0px;">SKU</div>
<div class="a" style="left:742px;top:208px;width:1112px;height:1px;background:#d3d3d3"></div>
<div class="a" style="left:299px;top:225px;width:385px;height:635px;box-sizing:border-box;background:#fff;border:1px solid #c9c9c9;border-radius:4px;overflow:hidden">
<div class="a" style="left:0;top:0;width:385px;height:59px;background:#f2f2f2;border-bottom:1px solid #e0e0e0"></div>
<div class="a" style="left:0;top:59px;width:385px;height:23px;background:#d3e4e9"></div>
<div class="a" style="left:0;top:82px;width:385px;height:1px;background:#e6e6e6"></div>
<div class="a" style="left:0;top:104px;width:385px;height:1px;background:#e6e6e6"></div>
<div class="a" style="left:137px;top:0;width:1px;height:105px;background:#e0e0e0"></div>
<div class="a" style="left:161px;top:0;width:1px;height:105px;background:#e0e0e0"></div>
</div>
<div class="t " style="left:346.0px;top:249.0px;">Дерево</div>
<svg class="a" style="left:439.2px;top:248.8px" width="14" height="14"><circle cx="7" cy="7" r="5.7" fill="none" stroke="#4fbdea" stroke-width="1.6"/><path d="M4.2 8.4l2.8-2.8 2.8 2.8" fill="none" stroke="#555" stroke-width="1.7"/></svg>
<svg class="a" style="left:516.7px;top:248.8px" width="14" height="14"><circle cx="7" cy="7" r="5.7" fill="none" stroke="#4fbdea" stroke-width="1.6"/><path d="M4.2 8.4l2.8-2.8 2.8 2.8" fill="none" stroke="#555" stroke-width="1.7"/></svg>
<div class="t " style="left:537.6px;top:249.0px;">Наименование</div>
<svg class="a" style="left:302px;top:289px" width="16" height="36"><circle cx="7.4" cy="7.5" r="5" fill="#f0f0f0" stroke="#8a8a8a" stroke-width="1.2"/><path d="M4.8 7.5h5.2M7.4 4.9v5.2" stroke="#555" stroke-width="1.1"/><circle cx="7.4" cy="28.9" r="4" fill="#555"/></svg>
<div class="t " style="left:466.7px;top:290.0px;">Все</div>
<div class="t " style="left:466.7px;top:313.0px;">Стеклопосуда</div>
<svg class="a" style="left:300px;top:860px" width="100" height="30" fill="none"><path d="M6.5 8.5h16" stroke="#333" stroke-width="1.3"/><path d="M8.8 12.7h11.5" stroke="#4fbdea" stroke-width="1.5"/><path d="M11 17h7" stroke="#444" stroke-width="1.5"/><path d="M13 21.3h3" stroke="#4fbdea" stroke-width="1.3"/><rect x="42.7" y="8.8" width="13" height="13" rx="2" stroke="#666" stroke-width="1.6"/><path d="M45 6.5h8.5" stroke="#4fbdea" stroke-width="1.2"/><path d="M49.2 12.3v6M46.2 15.3h6" stroke="#4fbdea" stroke-width="1.4"/><rect x="71.5" y="10.5" width="12.5" height="11.5" rx="2" stroke="#666" stroke-width="1.6"/><path d="M74 8.5h10.5v10M76 6.5h10.5v10" stroke="#4fbdea" stroke-width="1.1"/><path d="M77.7 13.3v6M74.7 16.3h6" stroke="#4fbdea" stroke-width="1.4"/></svg>
<svg class="a" style="left:583px;top:867px" width="13" height="13"><rect x="0" y="0" width="13" height="13" rx="2.3" fill="#777"/><path d="M2.5 7l2.9 2.9 5-6" fill="none" stroke="#fff" stroke-width="1.9" stroke-linecap="round"/></svg>
<div class="t " style="left:599.5px;top:869.0px;">Активные (F6)</div>
<div class="a" style="left:297px;top:889px;width:1560px;height:1px;background:#d3d3d3"></div>
<div class="a" style="left:299px;top:894px;width:46px;height:24px;box-sizing:border-box;background:#fff;border:1px solid #cfcfcf;border-radius:4px"></div>
<svg class="a" style="left:318px;top:899px" width="8" height="16"><circle cx="3.7" cy="3.2" r="1.35" fill="#111"/><circle cx="3.7" cy="7.6" r="1.35" fill="#111"/><circle cx="3.7" cy="11.9" r="1.35" fill="#111"/></svg>
<div class="a" style="left:692px;top:225px;width:1163px;height:601px;box-sizing:border-box;background:#fff;border:1px solid #87c3df;border-radius:4px;overflow:hidden"></div>
<div class="a" style="left:693.5px;top:226px;width:1145px;height:59px;background:#f2f2f2"></div>
<div class="a" style="left:693.5px;top:285px;width:1145px;height:1px;background:#e2e2e2"></div>
<div class="a" style="left:1027px;top:226px;width:1px;height:59px;background:#e0e0e0"></div>
<div class="a" style="left:1060px;top:226px;width:1px;height:59px;background:#e0e0e0"></div>
<div class="a" style="left:1139px;top:226px;width:1px;height:59px;background:#e0e0e0"></div>
<div class="a" style="left:1510px;top:226px;width:1px;height:59px;background:#e0e0e0"></div>
<div class="a" style="left:1601px;top:226px;width:1px;height:59px;background:#e0e0e0"></div>
<div class="a" style="left:1680px;top:226px;width:1px;height:59px;background:#e0e0e0"></div>
<div class="a" style="left:1759px;top:226px;width:1px;height:59px;background:#e0e0e0"></div>
<div class="clip" style="left:693.5px;top:286px;width:1145px;height:524px">
<div class="a" style="left:0;top:17px;width:1145px;height:1px;background:#e3e3e3"></div>
<div class="a" style="left:0;top:41px;width:1145px;height:1px;background:#e3e3e3"></div>
<div class="a" style="left:0;top:65px;width:1145px;height:1px;background:#e3e3e3"></div>
<div class="a" style="left:0;top:89px;width:1145px;height:1px;background:#e3e3e3"></div>
<div class="a" style="left:0;top:113px;width:1145px;height:1px;background:#e3e3e3"></div>
<div class="a" style="left:0;top:138px;width:1145px;height:1px;background:#e3e3e3"></div>
<div class="a" style="left:0;top:162px;width:1145px;height:1px;background:#e3e3e3"></div>
<div class="a" style="left:0;top:186px;width:1145px;height:1px;background:#e3e3e3"></div>
<div class="a" style="left:0;top:210px;width:1145px;height:1px;background:#e3e3e3"></div>
<div class="a" style="left:0;top:234px;width:1145px;height:1px;background:#e3e3e3"></div>
<div class="a" style="left:0;top:258px;width:1145px;height:1px;background:#e3e3e3"></div>
<div class="a" style="left:0;top:282px;width:1145px;height:1px;background:#e3e3e3"></div>
<div class="a" style="left:0;top:306px;width:1145px;height:1px;background:#e3e3e3"></div>
<div class="a" style="left:0;top:330px;width:1145px;height:1px;background:#e3e3e3"></div>
<div class="a" style="left:0;top:354px;width:1145px;height:1px;background:#e3e3e3"></div>
<div class="a" style="left:0;top:378px;width:1145px;height:1px;background:#e3e3e3"></div>
<div class="a" style="left:0;top:402px;width:1145px;height:1px;background:#e3e3e3"></div>
<div class="a" style="left:0;top:426px;width:1145px;height:1px;background:#e3e3e3"></div>
<div class="a" style="left:0;top:451px;width:1145px;height:1px;background:#e3e3e3"></div>
<div class="a" style="left:0;top:451px;width:1145px;height:24px;background:#d3e4e9"></div>
<div class="a" style="left:0;top:475px;width:1145px;height:1px;background:#e3e3e3"></div>
<div class="a" style="left:0;top:499px;width:1145px;height:1px;background:#e3e3e3"></div>
<div class="a" style="left:0;top:523px;width:1145px;height:1px;background:#e3e3e3"></div>
<div class="a" style="left:333.5px;top:0;width:1px;height:524px;background:#e3e3e3"></div>
<div class="a" style="left:366.5px;top:0;width:1px;height:524px;background:#e3e3e3"></div>
<div class="a" style="left:445.5px;top:0;width:1px;height:524px;background:#e3e3e3"></div>
<div class="a" style="left:816.5px;top:0;width:1px;height:524px;background:#e3e3e3"></div>
<div class="a" style="left:907.5px;top:0;width:1px;height:524px;background:#e3e3e3"></div>
<div class="a" style="left:986.5px;top:0;width:1px;height:524px;background:#e3e3e3"></div>
<div class="a" style="left:1065.5px;top:0;width:1px;height:524px;background:#e3e3e3"></div>
<div class="t" style="left:-0.5px;top:-1px;width:112.0px;overflow:hidden;padding-left:4.5px;box-sizing:border-box;letter-spacing:-0.17px;">66742</div>
<div class="t" style="left:112.5px;top:-1px;width:220.0px;overflow:hidden;padding-left:4.3px;box-sizing:border-box;">АНАНАС 1КГ 1000 СОВЕТОВ ДАЧНИКУ</div>
<div class="t" style="left:333.5px;top:-1px;width:32.5px;overflow:hidden;text-align:right;padding-right:3.8px;box-sizing:border-box;letter-spacing:-0.2px;">-11</div>
<div class="t" style="left:366.5px;top:-1px;width:78.5px;overflow:hidden;text-align:right;padding-right:4.4px;box-sizing:border-box;letter-spacing:-0.2px;">-11</div>
<div class="t" style="left:445.5px;top:-1px;width:370.0px;overflow:hidden;padding-left:4.8px;box-sizing:border-box;">Акт переоценки № ПО00399 от 2024-06-03</div>
<div class="t" style="left:816.5px;top:-1px;width:90.0px;overflow:hidden;padding-left:5.4px;box-sizing:border-box;letter-spacing:-0.33px;">29.07.24 03:00</div>
<div class="t" style="left:907.5px;top:-1px;width:78.5px;overflow:hidden;text-align:right;padding-right:3.5px;box-sizing:border-box;letter-spacing:-0.2px;">4,15</div>
<div class="t" style="left:986.5px;top:-1px;width:78.5px;overflow:hidden;text-align:right;padding-right:3.5px;box-sizing:border-box;letter-spacing:-0.2px;">4,09</div>
<div class="t" style="left:1065.5px;top:-1px;width:79.0px;overflow:hidden;text-align:right;padding-right:4px;box-sizing:border-box;letter-spacing:-0.2px;">4,15</div>
<div class="t" style="left:-0.5px;top:23px;width:112.0px;overflow:hidden;padding-left:4.5px;box-sizing:border-box;letter-spacing:-0.17px;">66137</div>
<div class="t" style="left:112.5px;top:23px;width:220.0px;overflow:hidden;padding-left:4.3px;box-sizing:border-box;">АНАНАС БЕЙБИ 1КГ</div>
<div class="t" style="left:333.5px;top:23px;width:32.5px;overflow:hidden;text-align:right;padding-right:3.8px;box-sizing:border-box;letter-spacing:-0.2px;">10</div>
<div class="t" style="left:366.5px;top:23px;width:78.5px;overflow:hidden;text-align:right;padding-right:4.4px;box-sizing:border-box;letter-spacing:-0.2px;">10</div>
<div class="t" style="left:445.5px;top:23px;width:370.0px;overflow:hidden;padding-left:4.8px;box-sizing:border-box;">Акт переоценки (сортность) № УУ00032 от 2024-06-04</div>
<div class="t" style="left:816.5px;top:23px;width:90.0px;overflow:hidden;padding-left:5.4px;box-sizing:border-box;letter-spacing:-0.33px;">30.07.24 11:03</div>
<div class="t" style="left:907.5px;top:23px;width:78.5px;overflow:hidden;text-align:right;padding-right:3.5px;box-sizing:border-box;letter-spacing:-0.2px;">2,92</div>
<div class="t" style="left:986.5px;top:23px;width:78.5px;overflow:hidden;text-align:right;padding-right:3.5px;box-sizing:border-box;letter-spacing:-0.2px;">20,99</div>
<div class="t" style="left:1065.5px;top:23px;width:79.0px;overflow:hidden;text-align:right;padding-right:4px;box-sizing:border-box;letter-spacing:-0.2px;">2,92</div>
<div class="t" style="left:-0.5px;top:47px;width:112.0px;overflow:hidden;padding-left:4.5px;box-sizing:border-box;letter-spacing:-0.17px;">8717163340561</div>
<div class="t" style="left:112.5px;top:47px;width:220.0px;overflow:hidden;padding-left:4.3px;box-sizing:border-box;">АНТИП.АЭР.РЕКСОНА АЛОЭ ВЕРА 150МЛ</div>
<div class="t" style="left:333.5px;top:47px;width:32.5px;overflow:hidden;text-align:right;padding-right:3.8px;box-sizing:border-box;letter-spacing:-0.2px;">-6</div>
<div class="t" style="left:366.5px;top:47px;width:78.5px;overflow:hidden;text-align:right;padding-right:4.4px;box-sizing:border-box;letter-spacing:-0.2px;">-6</div>
<div class="t" style="left:445.5px;top:47px;width:370.0px;overflow:hidden;padding-left:4.8px;box-sizing:border-box;">Акт переоценки № ПО00399 от 2024-06-03</div>
<div class="t" style="left:816.5px;top:47px;width:90.0px;overflow:hidden;padding-left:5.4px;box-sizing:border-box;letter-spacing:-0.33px;">29.07.24 03:00</div>
<div class="t" style="left:907.5px;top:47px;width:78.5px;overflow:hidden;text-align:right;padding-right:3.5px;box-sizing:border-box;letter-spacing:-0.2px;">4,09</div>
<div class="t" style="left:986.5px;top:47px;width:78.5px;overflow:hidden;text-align:right;padding-right:3.5px;box-sizing:border-box;letter-spacing:-0.2px;">3,99</div>
<div class="t" style="left:1065.5px;top:47px;width:79.0px;overflow:hidden;text-align:right;padding-right:4px;box-sizing:border-box;letter-spacing:-0.2px;">4,09</div>
<div class="t" style="left:-0.5px;top:71px;width:112.0px;overflow:hidden;padding-left:4.5px;box-sizing:border-box;letter-spacing:-0.17px;">66729</div>
<div class="t" style="left:112.5px;top:71px;width:220.0px;overflow:hidden;padding-left:4.3px;box-sizing:border-box;">АПЕЛЬСИН 1КГ</div>
<div class="t" style="left:333.5px;top:71px;width:32.5px;overflow:hidden;text-align:right;padding-right:3.8px;box-sizing:border-box;letter-spacing:-0.2px;">-12</div>
<div class="t" style="left:366.5px;top:71px;width:78.5px;overflow:hidden;text-align:right;padding-right:4.4px;box-sizing:border-box;letter-spacing:-0.2px;">-12</div>
<div class="t" style="left:445.5px;top:71px;width:370.0px;overflow:hidden;padding-left:4.8px;box-sizing:border-box;">Акт переоценки № ПО00399 от 2024-06-03</div>
<div class="t" style="left:816.5px;top:71px;width:90.0px;overflow:hidden;padding-left:5.4px;box-sizing:border-box;letter-spacing:-0.33px;">29.07.24 03:00</div>
<div class="t" style="left:907.5px;top:71px;width:78.5px;overflow:hidden;text-align:right;padding-right:3.5px;box-sizing:border-box;letter-spacing:-0.2px;">1,95</div>
<div class="t" style="left:986.5px;top:71px;width:78.5px;overflow:hidden;text-align:right;padding-right:3.5px;box-sizing:border-box;letter-spacing:-0.2px;">1,89</div>
<div class="t" style="left:1065.5px;top:71px;width:79.0px;overflow:hidden;text-align:right;padding-right:4px;box-sizing:border-box;letter-spacing:-0.2px;">1,95</div>
<div class="t" style="left:-0.5px;top:95px;width:112.0px;overflow:hidden;padding-left:4.5px;box-sizing:border-box;letter-spacing:-0.17px;">66136</div>
<div class="t" style="left:112.5px;top:95px;width:220.0px;overflow:hidden;padding-left:4.3px;box-sizing:border-box;">АРБУЗ 1КГ</div>
<div class="t" style="left:333.5px;top:95px;width:32.5px;overflow:hidden;text-align:right;padding-right:3.8px;box-sizing:border-box;letter-spacing:-0.2px;">9</div>
<div class="t" style="left:366.5px;top:95px;width:78.5px;overflow:hidden;text-align:right;padding-right:4.4px;box-sizing:border-box;letter-spacing:-0.2px;">-1</div>
<div class="t" style="left:445.5px;top:95px;width:370.0px;overflow:hidden;padding-left:4.8px;box-sizing:border-box;">Расценка № ИЖ5656546 от 2024-06-03</div>
<div class="t" style="left:816.5px;top:95px;width:90.0px;overflow:hidden;padding-left:5.4px;box-sizing:border-box;letter-spacing:-0.33px;">29.07.24 21:42</div>
<div class="t" style="left:907.5px;top:95px;width:78.5px;overflow:hidden;text-align:right;padding-right:3.5px;box-sizing:border-box;letter-spacing:-0.2px;">0,89</div>
<div class="t" style="left:986.5px;top:95px;width:78.5px;overflow:hidden;text-align:right;padding-right:3.5px;box-sizing:border-box;letter-spacing:-0.2px;">7,29</div>
<div class="t" style="left:1065.5px;top:95px;width:79.0px;overflow:hidden;text-align:right;padding-right:4px;box-sizing:border-box;letter-spacing:-0.2px;">0,89</div>
<div class="t" style="left:-0.5px;top:119px;width:112.0px;overflow:hidden;padding-left:4.5px;box-sizing:border-box;letter-spacing:-0.17px;">87052</div>
<div class="t" style="left:112.5px;top:119px;width:220.0px;overflow:hidden;padding-left:4.3px;box-sizing:border-box;">АРБУЗ (УЦЕН.) 1КГ RESPECT</div>
<div class="t" style="left:333.5px;top:119px;width:32.5px;overflow:hidden;text-align:right;padding-right:3.8px;box-sizing:border-box;letter-spacing:-0.2px;">10</div>
<div class="t" style="left:366.5px;top:119px;width:78.5px;overflow:hidden;text-align:right;padding-right:4.4px;box-sizing:border-box;letter-spacing:-0.2px;">10</div>
<div class="t" style="left:445.5px;top:119px;width:370.0px;overflow:hidden;padding-left:4.8px;box-sizing:border-box;">Акт переоценки (сортность) № УУ00035 от 2024-06-04</div>
<div class="t" style="left:816.5px;top:119px;width:90.0px;overflow:hidden;padding-left:5.4px;box-sizing:border-box;letter-spacing:-0.33px;">30.07.24 17:18</div>
<div class="t" style="left:907.5px;top:119px;width:78.5px;overflow:hidden;text-align:right;padding-right:3.5px;box-sizing:border-box;letter-spacing:-0.2px;">0,5</div>
<div class="t" style="left:986.5px;top:119px;width:78.5px;overflow:hidden;text-align:right;padding-right:3.5px;box-sizing:border-box;letter-spacing:-0.2px;">0,5</div>
<div class="t" style="left:-0.5px;top:144px;width:112.0px;overflow:hidden;padding-left:4.5px;box-sizing:border-box;letter-spacing:-0.17px;">4607065376987</div>
<div class="t" style="left:112.5px;top:144px;width:220.0px;overflow:hidden;padding-left:4.3px;box-sizing:border-box;">АССОРТИ МИНИС ИЗ ШОК.БАТОНЧИКОВ</div>
<div class="t" style="left:333.5px;top:144px;width:32.5px;overflow:hidden;text-align:right;padding-right:3.8px;box-sizing:border-box;letter-spacing:-0.2px;">-1</div>
<div class="t" style="left:366.5px;top:144px;width:78.5px;overflow:hidden;text-align:right;padding-right:4.4px;box-sizing:border-box;letter-spacing:-0.2px;">-1</div>
<div class="t" style="left:445.5px;top:144px;width:370.0px;overflow:hidden;padding-left:4.8px;box-sizing:border-box;">Акт переоценки № ПО00399 от 2024-06-03</div>
<div class="t" style="left:816.5px;top:144px;width:90.0px;overflow:hidden;padding-left:5.4px;box-sizing:border-box;letter-spacing:-0.33px;">29.07.24 03:00</div>
<div class="t" style="left:907.5px;top:144px;width:78.5px;overflow:hidden;text-align:right;padding-right:3.5px;box-sizing:border-box;letter-spacing:-0.2px;">9,65</div>
<div class="t" style="left:986.5px;top:144px;width:78.5px;overflow:hidden;text-align:right;padding-right:3.5px;box-sizing:border-box;letter-spacing:-0.2px;">9,59</div>
<div class="t" style="left:1065.5px;top:144px;width:79.0px;overflow:hidden;text-align:right;padding-right:4px;box-sizing:border-box;letter-spacing:-0.2px;">9,65</div>
<div class="t" style="left:-0.5px;top:168px;width:112.0px;overflow:hidden;padding-left:4.5px;box-sizing:border-box;letter-spacing:-0.17px;">60722</div>
<div class="t" style="left:112.5px;top:168px;width:220.0px;overflow:hidden;padding-left:4.3px;box-sizing:border-box;">БАКЛАЖАН РБ 1КГ</div>
<div class="t" style="left:333.5px;top:168px;width:32.5px;overflow:hidden;text-align:right;padding-right:3.8px;box-sizing:border-box;letter-spacing:-0.2px;">8</div>
<div class="t" style="left:366.5px;top:168px;width:78.5px;overflow:hidden;text-align:right;padding-right:4.4px;box-sizing:border-box;letter-spacing:-0.2px;">-2</div>
<div class="t" style="left:445.5px;top:168px;width:370.0px;overflow:hidden;padding-left:4.8px;box-sizing:border-box;">Расценка № ИЖ5656546 от 2024-06-03</div>
<div class="t" style="left:816.5px;top:168px;width:90.0px;overflow:hidden;padding-left:5.4px;box-sizing:border-box;letter-spacing:-0.33px;">29.07.24 21:42</div>
<div class="t" style="left:907.5px;top:168px;width:78.5px;overflow:hidden;text-align:right;padding-right:3.5px;box-sizing:border-box;letter-spacing:-0.2px;">2,99</div>
<div class="t" style="left:986.5px;top:168px;width:78.5px;overflow:hidden;text-align:right;padding-right:3.5px;box-sizing:border-box;letter-spacing:-0.2px;">5,39</div>
<div class="t" style="left:1065.5px;top:168px;width:79.0px;overflow:hidden;text-align:right;padding-right:4px;box-sizing:border-box;letter-spacing:-0.2px;">2,99</div>
<div class="t" style="left:-0.5px;top:192px;width:112.0px;overflow:hidden;padding-left:4.5px;box-sizing:border-box;letter-spacing:-0.17px;">4823006802418</div>
<div class="t" style="left:112.5px;top:192px;width:220.0px;overflow:hidden;padding-left:4.3px;box-sizing:border-box;">Баклажаны «Нежин» по-гречески, 450г</div>
<div class="t" style="left:366.5px;top:192px;width:78.5px;overflow:hidden;text-align:right;padding-right:4.4px;box-sizing:border-box;letter-spacing:-0.2px;">-22</div>
<div class="t" style="left:445.5px;top:192px;width:370.0px;overflow:hidden;padding-left:4.8px;box-sizing:border-box;">Расценка № ГВ1234560 от 2024-06-03</div>
<div class="t" style="left:816.5px;top:192px;width:90.0px;overflow:hidden;padding-left:5.4px;box-sizing:border-box;letter-spacing:-0.33px;">29.07.24 11:08</div>
<div class="t" style="left:907.5px;top:192px;width:78.5px;overflow:hidden;text-align:right;padding-right:3.5px;box-sizing:border-box;letter-spacing:-0.2px;">27,99</div>
<div class="t" style="left:1065.5px;top:192px;width:79.0px;overflow:hidden;text-align:right;padding-right:4px;box-sizing:border-box;letter-spacing:-0.2px;">27,99</div>
<div class="t" style="left:-0.5px;top:216px;width:112.0px;overflow:hidden;padding-left:4.5px;box-sizing:border-box;letter-spacing:-0.17px;">4015000976534</div>
<div class="t" style="left:112.5px;top:216px;width:220.0px;overflow:hidden;padding-left:4.3px;box-sizing:border-box;">БАЛЬЗАМ ГЛИСС КУР МИЛЛИОН ГЛОСС</div>
<div class="t" style="left:366.5px;top:216px;width:78.5px;overflow:hidden;text-align:right;padding-right:4.4px;box-sizing:border-box;letter-spacing:-0.2px;">-2</div>
<div class="t" style="left:445.5px;top:216px;width:370.0px;overflow:hidden;padding-left:4.8px;box-sizing:border-box;">Расценка № ПР1487265 от 2024-06-03</div>
<div class="t" style="left:816.5px;top:216px;width:90.0px;overflow:hidden;padding-left:5.4px;box-sizing:border-box;letter-spacing:-0.33px;">29.07.24 11:09</div>
<div class="t" style="left:907.5px;top:216px;width:78.5px;overflow:hidden;text-align:right;padding-right:3.5px;box-sizing:border-box;letter-spacing:-0.2px;">379,99</div>
<div class="t" style="left:1065.5px;top:216px;width:79.0px;overflow:hidden;text-align:right;padding-right:4px;box-sizing:border-box;letter-spacing:-0.2px;">379,99</div>
<div class="t" style="left:-0.5px;top:240px;width:112.0px;overflow:hidden;padding-left:4.5px;box-sizing:border-box;letter-spacing:-0.17px;">4810738001875</div>
<div class="t" style="left:112.5px;top:240px;width:220.0px;overflow:hidden;padding-left:4.3px;box-sizing:border-box;">ВИНО ПОРТВЕЙН 777 КР.КРЕП. РБ 0,7Л</div>
<div class="t" style="left:333.5px;top:240px;width:32.5px;overflow:hidden;text-align:right;padding-right:3.8px;box-sizing:border-box;letter-spacing:-0.2px;">1</div>
<div class="t" style="left:366.5px;top:240px;width:78.5px;overflow:hidden;text-align:right;padding-right:4.4px;box-sizing:border-box;letter-spacing:-0.2px;">1</div>
<div class="t" style="left:445.5px;top:240px;width:370.0px;overflow:hidden;padding-left:4.8px;box-sizing:border-box;">Акт переоценки № ПО00436 от 2024-06-04</div>
<div class="t" style="left:816.5px;top:240px;width:90.0px;overflow:hidden;padding-left:5.4px;box-sizing:border-box;letter-spacing:-0.33px;">30.07.24 17:11</div>
<div class="t" style="left:907.5px;top:240px;width:78.5px;overflow:hidden;text-align:right;padding-right:3.5px;box-sizing:border-box;letter-spacing:-0.2px;">777</div>
<div class="t" style="left:986.5px;top:240px;width:78.5px;overflow:hidden;text-align:right;padding-right:3.5px;box-sizing:border-box;letter-spacing:-0.2px;">129,99</div>
<div class="t" style="left:1065.5px;top:240px;width:79.0px;overflow:hidden;text-align:right;padding-right:4px;box-sizing:border-box;letter-spacing:-0.2px;">129,99</div>
<div class="t" style="left:-0.5px;top:264px;width:112.0px;overflow:hidden;padding-left:4.5px;box-sizing:border-box;letter-spacing:-0.17px;">4603934000250</div>
<div class="t" style="left:112.5px;top:264px;width:220.0px;overflow:hidden;padding-left:4.3px;box-sizing:border-box;">ВОДА ПИТ.СВЯТОЙ ИСТОЧНИК Н/ГАЗ</div>
<div class="t" style="left:333.5px;top:264px;width:32.5px;overflow:hidden;text-align:right;padding-right:3.8px;box-sizing:border-box;letter-spacing:-0.2px;">-5</div>
<div class="t" style="left:366.5px;top:264px;width:78.5px;overflow:hidden;text-align:right;padding-right:4.4px;box-sizing:border-box;letter-spacing:-0.2px;">-5</div>
<div class="t" style="left:445.5px;top:264px;width:370.0px;overflow:hidden;padding-left:4.8px;box-sizing:border-box;">Акт переоценки № ПО00399 от 2024-06-03</div>
<div class="t" style="left:816.5px;top:264px;width:90.0px;overflow:hidden;padding-left:5.4px;box-sizing:border-box;letter-spacing:-0.33px;">29.07.24 03:00</div>
<div class="t" style="left:907.5px;top:264px;width:78.5px;overflow:hidden;text-align:right;padding-right:3.5px;box-sizing:border-box;letter-spacing:-0.2px;">1,09</div>
<div class="t" style="left:986.5px;top:264px;width:78.5px;overflow:hidden;text-align:right;padding-right:3.5px;box-sizing:border-box;letter-spacing:-0.2px;">0,99</div>
<div class="t" style="left:1065.5px;top:264px;width:79.0px;overflow:hidden;text-align:right;padding-right:4px;box-sizing:border-box;letter-spacing:-0.2px;">1,09</div>
<div class="t" style="left:-0.5px;top:288px;width:112.0px;overflow:hidden;padding-left:4.5px;box-sizing:border-box;letter-spacing:-0.17px;">4812016000013</div>
<div class="t" style="left:112.5px;top:288px;width:220.0px;overflow:hidden;padding-left:4.3px;box-sizing:border-box;">ГОРОШЕК ЗЕЛ.КОНС.СУПЕР! 420Г Ж/Б</div>
<div class="t" style="left:366.5px;top:288px;width:78.5px;overflow:hidden;text-align:right;padding-right:4.4px;box-sizing:border-box;letter-spacing:-0.2px;">-12</div>
<div class="t" style="left:445.5px;top:288px;width:370.0px;overflow:hidden;padding-left:4.8px;box-sizing:border-box;">Расценка № ПС0027866 от 2024-06-08</div>
<div class="t" style="left:816.5px;top:288px;width:90.0px;overflow:hidden;padding-left:5.4px;box-sizing:border-box;letter-spacing:-0.33px;">03.08.24 15:50</div>
<div class="t" style="left:907.5px;top:288px;width:78.5px;overflow:hidden;text-align:right;padding-right:3.5px;box-sizing:border-box;letter-spacing:-0.2px;">2,29</div>
<div class="t" style="left:986.5px;top:288px;width:78.5px;overflow:hidden;text-align:right;padding-right:3.5px;box-sizing:border-box;letter-spacing:-0.2px;">0,99</div>
<div class="t" style="left:1065.5px;top:288px;width:79.0px;overflow:hidden;text-align:right;padding-right:4px;box-sizing:border-box;letter-spacing:-0.2px;">0,99</div>
<div class="t" style="left:-0.5px;top:312px;width:112.0px;overflow:hidden;padding-left:4.5px;box-sizing:border-box;letter-spacing:-0.17px;">4811040118886</div>
<div class="t" style="left:112.5px;top:312px;width:220.0px;overflow:hidden;padding-left:4.3px;box-sizing:border-box;">КОЛБАСА ВАР.МОРТАДЕЛЛА В/С 650Г</div>
<div class="t" style="left:333.5px;top:312px;width:32.5px;overflow:hidden;text-align:right;padding-right:3.8px;box-sizing:border-box;letter-spacing:-0.2px;">5</div>
<div class="t" style="left:445.5px;top:312px;width:370.0px;overflow:hidden;padding-left:4.8px;box-sizing:border-box;">Расценка № ПС1236541 от 2024-06-04</div>
<div class="t" style="left:816.5px;top:312px;width:90.0px;overflow:hidden;padding-left:5.4px;box-sizing:border-box;letter-spacing:-0.33px;">30.07.24 11:34</div>
<div class="t" style="left:907.5px;top:312px;width:78.5px;overflow:hidden;text-align:right;padding-right:3.5px;box-sizing:border-box;letter-spacing:-0.2px;">63,99</div>
<div class="t" style="left:986.5px;top:312px;width:78.5px;overflow:hidden;text-align:right;padding-right:3.5px;box-sizing:border-box;letter-spacing:-0.2px;">4,89</div>
<div class="t" style="left:1065.5px;top:312px;width:79.0px;overflow:hidden;text-align:right;padding-right:4px;box-sizing:border-box;letter-spacing:-0.2px;">63,99</div>
<div class="t" style="left:-0.5px;top:336px;width:112.0px;overflow:hidden;padding-left:4.5px;box-sizing:border-box;letter-spacing:-0.17px;">16959</div>
<div class="t" style="left:112.5px;top:336px;width:220.0px;overflow:hidden;padding-left:4.3px;box-sizing:border-box;">КОЛБАСА ВАР.НЕЖЕНКА В/С 1КГ ГАЛАН</div>
<div class="t" style="left:333.5px;top:336px;width:32.5px;overflow:hidden;text-align:right;padding-right:3.8px;box-sizing:border-box;letter-spacing:-0.2px;">4,99</div>
<div class="t" style="left:366.5px;top:336px;width:78.5px;overflow:hidden;text-align:right;padding-right:4.4px;box-sizing:border-box;letter-spacing:-0.2px;">-0,01</div>
<div class="t" style="left:445.5px;top:336px;width:370.0px;overflow:hidden;padding-left:4.8px;box-sizing:border-box;">Расценка № РН1254589 от 2024-06-03</div>
<div class="t" style="left:816.5px;top:336px;width:90.0px;overflow:hidden;padding-left:5.4px;box-sizing:border-box;letter-spacing:-0.33px;">29.07.24 18:27</div>
<div class="t" style="left:907.5px;top:336px;width:78.5px;overflow:hidden;text-align:right;padding-right:3.5px;box-sizing:border-box;letter-spacing:-0.2px;">3,99</div>
<div class="t" style="left:986.5px;top:336px;width:78.5px;overflow:hidden;text-align:right;padding-right:3.5px;box-sizing:border-box;letter-spacing:-0.2px;">4,29</div>
<div class="t" style="left:1065.5px;top:336px;width:79.0px;overflow:hidden;text-align:right;padding-right:4px;box-sizing:border-box;letter-spacing:-0.2px;">3,99</div>
<div class="t" style="left:-0.5px;top:360px;width:112.0px;overflow:hidden;padding-left:4.5px;box-sizing:border-box;letter-spacing:-0.17px;">16110</div>
<div class="t" style="left:112.5px;top:360px;width:220.0px;overflow:hidden;padding-left:4.3px;box-sizing:border-box;">КОЛБАСА ВАР.ЧАЙНАЯ АРОМ.2С ГАЛАН</div>
<div class="t" style="left:333.5px;top:360px;width:32.5px;overflow:hidden;text-align:right;padding-right:3.8px;box-sizing:border-box;letter-spacing:-0.2px;">8,98</div>
<div class="t" style="left:366.5px;top:360px;width:78.5px;overflow:hidden;text-align:right;padding-right:4.4px;box-sizing:border-box;letter-spacing:-0.2px;">-1,02</div>
<div class="t" style="left:445.5px;top:360px;width:370.0px;overflow:hidden;padding-left:4.8px;box-sizing:border-box;">Расценка № РН1254589 от 2024-06-03</div>
<div class="t" style="left:816.5px;top:360px;width:90.0px;overflow:hidden;padding-left:5.4px;box-sizing:border-box;letter-spacing:-0.33px;">29.07.24 18:27</div>
<div class="t" style="left:907.5px;top:360px;width:78.5px;overflow:hidden;text-align:right;padding-right:3.5px;box-sizing:border-box;letter-spacing:-0.2px;">3,29</div>
<div class="t" style="left:986.5px;top:360px;width:78.5px;overflow:hidden;text-align:right;padding-right:3.5px;box-sizing:border-box;letter-spacing:-0.2px;">4,69</div>
<div class="t" style="left:1065.5px;top:360px;width:79.0px;overflow:hidden;text-align:right;padding-right:4px;box-sizing:border-box;letter-spacing:-0.2px;">3,29</div>
<div class="t" style="left:-0.5px;top:384px;width:112.0px;overflow:hidden;padding-left:4.5px;box-sizing:border-box;letter-spacing:-0.17px;">4810410038052</div>
<div class="t" style="left:112.5px;top:384px;width:220.0px;overflow:hidden;padding-left:4.3px;box-sizing:border-box;">КОНФЕТЫ КРАСНАЯ ШАПОЧКА К-КА</div>
<div class="t" style="left:333.5px;top:384px;width:32.5px;overflow:hidden;text-align:right;padding-right:3.8px;box-sizing:border-box;letter-spacing:-0.2px;">5</div>
<div class="t" style="left:366.5px;top:384px;width:78.5px;overflow:hidden;text-align:right;padding-right:4.4px;box-sizing:border-box;letter-spacing:-0.2px;">-15</div>
<div class="t" style="left:445.5px;top:384px;width:370.0px;overflow:hidden;padding-left:4.8px;box-sizing:border-box;">Расценка № ПС1236541 от 2024-06-04</div>
<div class="t" style="left:816.5px;top:384px;width:90.0px;overflow:hidden;padding-left:5.4px;box-sizing:border-box;letter-spacing:-0.33px;">30.07.24 11:34</div>
<div class="t" style="left:907.5px;top:384px;width:78.5px;overflow:hidden;text-align:right;padding-right:3.5px;box-sizing:border-box;letter-spacing:-0.2px;">7,89</div>
<div class="t" style="left:986.5px;top:384px;width:78.5px;overflow:hidden;text-align:right;padding-right:3.5px;box-sizing:border-box;letter-spacing:-0.2px;">8,59</div>
<div class="t" style="left:1065.5px;top:384px;width:79.0px;overflow:hidden;text-align:right;padding-right:4px;box-sizing:border-box;letter-spacing:-0.2px;">7,89</div>
<div class="t" style="left:-0.5px;top:408px;width:112.0px;overflow:hidden;padding-left:4.5px;box-sizing:border-box;letter-spacing:-0.17px;">4810410053338</div>
<div class="t" style="left:112.5px;top:408px;width:220.0px;overflow:hidden;padding-left:4.3px;box-sizing:border-box;">КОНФЕТЫ НЕЖНОЕ СУФЛЕ ВИШНЕВОЕ</div>
<div class="t" style="left:333.5px;top:408px;width:32.5px;overflow:hidden;text-align:right;padding-right:3.8px;box-sizing:border-box;letter-spacing:-0.2px;">16</div>
<div class="t" style="left:445.5px;top:408px;width:370.0px;overflow:hidden;padding-left:4.8px;box-sizing:border-box;">Расценка № ПС1236541 от 2024-06-04</div>
<div class="t" style="left:816.5px;top:408px;width:90.0px;overflow:hidden;padding-left:5.4px;box-sizing:border-box;letter-spacing:-0.33px;">30.07.24 11:34</div>
<div class="t" style="left:907.5px;top:408px;width:78.5px;overflow:hidden;text-align:right;padding-right:3.5px;box-sizing:border-box;letter-spacing:-0.2px;">2,89</div>
<div class="t" style="left:986.5px;top:408px;width:78.5px;overflow:hidden;text-align:right;padding-right:3.5px;box-sizing:border-box;letter-spacing:-0.2px;">2,99</div>
<div class="t" style="left:1065.5px;top:408px;width:79.0px;overflow:hidden;text-align:right;padding-right:4px;box-sizing:border-box;letter-spacing:-0.2px;">2,89</div>
<div class="t" style="left:-0.5px;top:432px;width:112.0px;overflow:hidden;padding-left:4.5px;box-sizing:border-box;letter-spacing:-0.17px;">4810410038250</div>
<div class="t" style="left:112.5px;top:432px;width:220.0px;overflow:hidden;padding-left:4.3px;box-sizing:border-box;">КОНФЕТЫ ТРЮФЕЛЬ КАПУЧИНО 360Г</div>
<div class="t" style="left:333.5px;top:432px;width:32.5px;overflow:hidden;text-align:right;padding-right:3.8px;box-sizing:border-box;letter-spacing:-0.2px;">5</div>
<div class="t" style="left:445.5px;top:432px;width:370.0px;overflow:hidden;padding-left:4.8px;box-sizing:border-box;">Расценка № ПС1236541 от 2024-06-04</div>
<div class="t" style="left:816.5px;top:432px;width:90.0px;overflow:hidden;padding-left:5.4px;box-sizing:border-box;letter-spacing:-0.33px;">30.07.24 11:34</div>
<div class="t" style="left:907.5px;top:432px;width:78.5px;overflow:hidden;text-align:right;padding-right:3.5px;box-sizing:border-box;letter-spacing:-0.2px;">8,49</div>
<div class="t" style="left:986.5px;top:432px;width:78.5px;overflow:hidden;text-align:right;padding-right:3.5px;box-sizing:border-box;letter-spacing:-0.2px;">8,79</div>
<div class="t" style="left:1065.5px;top:432px;width:79.0px;overflow:hidden;text-align:right;padding-right:4px;box-sizing:border-box;letter-spacing:-0.2px;">8,49</div>
<div class="t" style="left:-0.5px;top:457px;width:112.0px;overflow:hidden;padding-left:4.5px;box-sizing:border-box;letter-spacing:-0.17px;">4605246004995</div>
<div class="t" style="left:112.5px;top:457px;width:220.0px;overflow:hidden;padding-left:4.3px;box-sizing:border-box;">КОФЕ ЖОКЕЙ ИТАЛЬЯНО МОЛ 250Г</div>
<div class="t" style="left:333.5px;top:457px;width:32.5px;overflow:hidden;text-align:right;padding-right:3.8px;box-sizing:border-box;letter-spacing:-0.2px;">20</div>
<div class="t" style="left:445.5px;top:457px;width:370.0px;overflow:hidden;padding-left:4.8px;box-sizing:border-box;">Расценка № ПС1234567 от 2024-06-04</div>
<div class="t" style="left:816.5px;top:457px;width:90.0px;overflow:hidden;padding-left:5.4px;box-sizing:border-box;letter-spacing:-0.33px;">30.07.24 21:00</div>
<div class="t" style="left:907.5px;top:457px;width:78.5px;overflow:hidden;text-align:right;padding-right:3.5px;box-sizing:border-box;letter-spacing:-0.2px;">3,99</div>
<div class="t" style="left:986.5px;top:457px;width:78.5px;overflow:hidden;text-align:right;padding-right:3.5px;box-sizing:border-box;letter-spacing:-0.2px;">6,69</div>
<div class="t" style="left:1065.5px;top:457px;width:79.0px;overflow:hidden;text-align:right;padding-right:4px;box-sizing:border-box;letter-spacing:-0.2px;">3,99</div>
<div class="t" style="left:-0.5px;top:481px;width:112.0px;overflow:hidden;padding-left:4.5px;box-sizing:border-box;letter-spacing:-0.17px;">4605246004643</div>
<div class="t" style="left:112.5px;top:481px;width:220.0px;overflow:hidden;padding-left:4.3px;box-sizing:border-box;">КОФЕ ЖОКЕЙ ИТАЛЬЯНО МОЛ. РОСТ</div>
<div class="t" style="left:445.5px;top:481px;width:370.0px;overflow:hidden;padding-left:4.8px;box-sizing:border-box;">Расценка № ПС1234567 от 2024-06-04</div>
<div class="t" style="left:816.5px;top:481px;width:90.0px;overflow:hidden;padding-left:5.4px;box-sizing:border-box;letter-spacing:-0.33px;">30.07.24 21:00</div>
<div class="t" style="left:907.5px;top:481px;width:78.5px;overflow:hidden;text-align:right;padding-right:3.5px;box-sizing:border-box;letter-spacing:-0.2px;">1,59</div>
<div class="t" style="left:986.5px;top:481px;width:78.5px;overflow:hidden;text-align:right;padding-right:3.5px;box-sizing:border-box;letter-spacing:-0.2px;">3,15</div>
<div class="t" style="left:1065.5px;top:481px;width:79.0px;overflow:hidden;text-align:right;padding-right:4px;box-sizing:border-box;letter-spacing:-0.2px;">1,59</div>
<div class="t" style="left:-0.5px;top:505px;width:112.0px;overflow:hidden;padding-left:4.5px;box-sizing:border-box;letter-spacing:-0.17px;">4605246002670</div>
<div class="t" style="left:112.5px;top:505px;width:220.0px;overflow:hidden;padding-left:4.3px;box-sizing:border-box;">КОФЕ ЖОКЕЙ КЛАССИЧЕСКИЙ МОЛ.</div>
<div class="t" style="left:445.5px;top:505px;width:370.0px;overflow:hidden;padding-left:4.8px;box-sizing:border-box;">Расценка № ПС1234567 от 2024-06-04</div>
<div class="t" style="left:816.5px;top:505px;width:90.0px;overflow:hidden;padding-left:5.4px;box-sizing:border-box;letter-spacing:-0.33px;">30.07.24 21:00</div>
<div class="t" style="left:907.5px;top:505px;width:78.5px;overflow:hidden;text-align:right;padding-right:3.5px;box-sizing:border-box;letter-spacing:-0.2px;">1,69</div>
<div class="t" style="left:986.5px;top:505px;width:78.5px;overflow:hidden;text-align:right;padding-right:3.5px;box-sizing:border-box;letter-spacing:-0.2px;">3,15</div>
<div class="t" style="left:1065.5px;top:505px;width:79.0px;overflow:hidden;text-align:right;padding-right:4px;box-sizing:border-box;letter-spacing:-0.2px;">1,69</div>
</div>
<div class="t " style="left:720.0px;top:249.0px;">Штрихкод</div>
<svg class="a" style="left:860.6px;top:248.9px" width="14" height="14"><circle cx="7" cy="7" r="5.7" fill="none" stroke="#4fbdea" stroke-width="1.6"/><path d="M4.2 8.4l2.8-2.8 2.8 2.8" fill="none" stroke="#555" stroke-width="1.7"/></svg>
<div class="t " style="left:881.5px;top:249.0px;">Наименование</div>
<div class="clip" style="left:1028px;top:226px;width:32px;height:59px">
<div class="t" style="left:-47.7px;top:6px;width:100px;text-align:center">Текущи</div>
<div class="t" style="left:-47.7px;top:23px;width:100px;text-align:center">й</div>
<div class="t" style="left:-47.7px;top:40px;width:100px;text-align:center">остаток</div>
</div>
<div class="t " style="left:1066.7px;top:249.0px;">Остаток до</div>
<div class="t " style="left:1174.5px;top:249.0px;width:300px;text-align:center;">Описание</div>
<div class="t " style="left:1515.0px;top:249.0px;">Дата/время с</div>
<div class="t " style="left:1490.5px;top:240.0px;width:300px;text-align:center;">Розничная</div>
<div class="t " style="left:1490.5px;top:257.0px;width:300px;text-align:center;">цена</div>
<div class="t " style="left:1569.5px;top:232.0px;width:300px;text-align:center;">Текущая</div>
<div class="t " style="left:1569.5px;top:249.0px;width:300px;text-align:center;">цена на</div>
<div class="t " style="left:1569.5px;top:266.0px;width:300px;text-align:center;">ценниках</div>
<div class="t " style="left:1648.5px;top:228.0px;width:300px;text-align:center;">Текущая</div>
<div class="t " style="left:1648.5px;top:245.0px;width:300px;text-align:center;">цена в</div>
<div class="t " style="left:1648.5px;top:262.0px;width:300px;text-align:center;">оборудован</div>
<div class="a" style="left:1600px;top:225px;width:242px;height:62px;box-sizing:border-box;border:3px solid #ff0000;border-radius:2px"></div>
<svg class="a" style="left:1838px;top:226px" width="16" height="600"><path d="M9 8l4.2 7h-8.4z" fill="#dcdcdc"/><path d="M8.4 576l4.5-6.5h-9z" fill="#dcdcdc"/></svg>
<div class="a" style="left:1842px;top:341px;width:9px;height:198px;background:#dcdcdc;border-radius:4.5px"></div>
<div class="a" style="left:794px;top:813.2px;width:1020.6px;height:8.7px;background:#d9d9d9;border-radius:4.5px"></div>
<svg class="a" style="left:693px;top:809px" width="1145" height="16"><path d="M8 8.5l6.5-4.5v9z" fill="#dcdcdc"/><path d="M1138 8.5l-6.5-4.5v9z" fill="#dcdcdc"/></svg>
<div class="a" style="left:692px;top:828px;width:31px;height:25px;background:#d3e4e9;border-radius:4px"></div>
<svg class="a" style="left:0;top:0" width="1863" height="922" viewBox="0 0 1863 922" fill="none" stroke-linecap="round" stroke-linejoin="round"><circle cx="701.3" cy="835" r="1.9" stroke="#45b9ea" stroke-width="1.3"/><path d="M706.5 835h10" stroke="#3d3d3d" stroke-width="1.6" stroke-linecap="butt"/><circle cx="701.3" cy="840.5" r="1.9" stroke="#45b9ea" stroke-width="1.3"/><path d="M706.5 840.5h10" stroke="#3d3d3d" stroke-width="1.6" stroke-linecap="butt"/><circle cx="701.3" cy="846" r="1.9" stroke="#45b9ea" stroke-width="1.3"/><path d="M706.5 846h10" stroke="#3d3d3d" stroke-width="1.6" stroke-linecap="butt"/><path d="M731 838h15M731 843.3h15M736 833v15M741.4 833v15" stroke="#45b9ea" stroke-width="1.3" stroke-linecap="butt"/><rect x="730.8" y="832.8" width="15.6" height="15.6" rx="1" stroke="#222" stroke-width="1.6"/><path d="M765.8 834.4h15.6M769.8 843.3h7.6" stroke="#3d3d3d" stroke-width="1.4"/><path d="M767.8 838.9h11.6M771.8 847.4h3.6" stroke="#45b9ea" stroke-width="1.4"/><path d="M815.00 840.30L816.82 842.45L815.99 844.45L813.18 844.68L811.90 845.67L810.95 848.32L808.80 848.60L807.20 846.29L805.70 845.67L802.93 846.17L801.61 844.45L802.81 841.90L802.60 840.30L800.78 838.15L801.61 836.15L804.42 835.92L805.70 834.93L806.65 832.28L808.80 832.00L810.40 834.31L811.90 834.93L814.67 834.43L815.99 836.15L814.79 838.70Z" stroke="#3d3d3d" stroke-width="1.5"/><circle cx="808.8" cy="840.3" r="2.8" stroke="#45b9ea" stroke-width="1.7"/><path d="M842.8 834.5h9.5M842.8 840.9h9.5M842.8 847.3h9.5" stroke="#3d3d3d" stroke-width="1.5"/><text x="837.3" y="837.2" font-size="6" font-weight="bold" fill="#45b9ea" text-anchor="middle" font-family="Liberation Sans" stroke="none">1</text><text x="837.3" y="843.6" font-size="6" font-weight="bold" fill="#45b9ea" text-anchor="middle" font-family="Liberation Sans" stroke="none">2</text><text x="837.3" y="850" font-size="6" font-weight="bold" fill="#45b9ea" text-anchor="middle" font-family="Liberation Sans" stroke="none">3</text><path d="M866.5 833.5h16.8M866.5 837.8h16.8M866.5 842.2h6.5M866.5 846.5h6.5" stroke="#3d3d3d" stroke-width="1.5"/><path d="M880 840.6v7.6M876.2 844.4h7.6" stroke="#45b9ea" stroke-width="1.5"/><path d="M908 835.4h-4.5a2 2 0 0 0-2 2v8.8a2 2 0 0 0 2 2h10a2 2 0 0 0 2-2v-4.5" stroke="#555" stroke-width="1.6"/><path d="M909.5 840.8l8.3-8.3M912.8 832.5h5v5" stroke="#45b9ea" stroke-width="1.6"/><path d="M937.3 845.3v-9.8h10.5M944.8 832.5l3 3-3 3" stroke="#222" stroke-width="1.5"/><path d="M953.3 835.3h1.7v10.7h-11.5M946.3 843l-3 3 3 3" stroke="#45b9ea" stroke-width="1.5"/></svg>
<svg class="a" style="left:908px;top:862px" width="13" height="13"><rect x="0" y="0" width="13" height="13" rx="2.3" fill="#777"/><path d="M2.5 7l2.9 2.9 5-6" fill="none" stroke="#fff" stroke-width="1.9" stroke-linecap="round"/></svg>
<div class="t " style="left:924.2px;top:864.0px;">Активные (F6)</div>
<div class="a" style="left:1015.5px;top:857.5px;width:171px;height:24px;box-sizing:border-box;background:#fff;border:1px solid #1f7fb3;border-radius:2px"></div>
<div class="t " style="left:1024.0px;top:863.0px;">Ценники и оборуд. (F9)</div>
<svg class="a" style="left:1170px;top:864px" width="12" height="10"><path d="M2 2.5l4 3.8 4-3.8" fill="none" stroke="#111" stroke-width="1.8"/></svg>
<div class="a" style="left:1018px;top:762px;width:166px;height:118px;border-radius:4px;box-shadow:3px 6px 14px rgba(0,0,0,.16)"></div><div class="a" style="left:1018px;top:762px;width:166px;height:90px;background:#fff;border-radius:0 0 4px 4px;box-shadow:0 2px 3px rgba(0,0,0,.2)"></div>
<div class="a" style="left:1018px;top:816px;width:166px;height:18px;background:#787878"></div>
<div class="t " style="left:1024.0px;top:764.0px;">(Все)</div>
<div class="t " style="left:1024.0px;top:782.0px;">Ценники (F11)</div>
<div class="t " style="left:1024.0px;top:800.0px;">Оборудование (F10)</div>
<div class="t " style="left:1024.0px;top:818.0px;color:#fff">Ценники и оборуд. (F9)</div>
<div class="t " style="left:1024.0px;top:836.0px;">По штрихкодам (F8)</div>
<div class="a" style="left:1016px;top:759px;width:171px;height:122px;box-sizing:border-box;border:3px solid #ff0000;border-radius:2px"></div>
<svg class="a" style="left:1197.5px;top:862px" width="14" height="14"><rect x="0.75" y="0.75" width="11.7" height="11.7" rx="2.3" fill="#f9f9f9" stroke="#7a7a7a" stroke-width="1.5"/></svg>
<div class="t " style="left:1214.0px;top:864.0px;">С ошибками (F6)</div>
<div class="a" style="left:1321px;top:858px;width:159px;height:22px;box-sizing:border-box;background:#fff;border:1px solid #c4c4c4;border-radius:4px"></div>
<div class="t " style="left:1336.0px;top:863.0px;">Распечатать ценники</div>
<div class="a" style="left:1485.5px;top:858px;width:170.5px;height:22px;box-sizing:border-box;background:#fff;border:1px solid #c4c4c4;border-radius:4px"></div>
<div class="t " style="left:1501.3px;top:863.0px;">Перепечатать ценники</div>
<div class="a" style="left:1661.5px;top:858px;width:194.5px;height:22px;box-sizing:border-box;background:#fff;border:1px solid #c4c4c4;border-radius:4px"></div>
<div class="t " style="left:1678.0px;top:863.0px;">Загрузить в оборудование</div>
<div class="a" style="left:1320px;top:858px;width:537px;height:22px;box-sizing:border-box;border:3px solid #ff0000;border-radius:2px"></div>
<div class="a" style="left:1316px;top:880px;width:545px;height:8px;background:#f2f2f2"></div>
<div class="a" style="left:1480px;top:861px;width:5px;height:16px;background:#f0f0f0"></div>
<div class="a" style="left:297px;top:889px;width:1560px;height:1px;background:#d3d3d3"></div>
<div class="a" style="left:1392.5px;top:894px;width:45.0px;height:24px;box-sizing:border-box;background:#fff;border:1px solid #cfcfcf;border-radius:4px"></div>
<svg class="a" style="left:1405px;top:898px" width="20" height="16" fill="none"><path d="M3.5 8.5a6 6 0 0 1 10.5-3.8" stroke="#444" stroke-width="1.9"/><path d="M15.3 2v4.3h-4.3z" fill="#444"/><path d="M16.5 7.5a6 6 0 0 1-10.5 3.8" stroke="#45b9ea" stroke-width="1.9"/><path d="M4.7 14v-4.3h4.3z" fill="#45b9ea"/></svg>
<div class="a" style="left:1442.5px;top:894px;width:115.0px;height:24px;box-sizing:border-box;background:#fff;border:1px solid #cfcfcf;border-radius:4px"></div>
<svg class="a" style="left:1456px;top:899px" width="16" height="16" fill="none"><path d="M3 1.5h6.5l4 4v7.5a1.5 1.5 0 0 1-1.5 1.5h-8.5a1.5 1.5 0 0 1-1.5-1.5v-10a1.5 1.5 0 0 1 1.5-1.5z" stroke="#555" stroke-width="1.6"/><rect x="3.6" y="9.2" width="8.8" height="3.6" fill="#45b9ea"/></svg>
<div class="t " style="left:1478.0px;top:899.0px;color:#9a9a9a">Сохранить</div>
<div class="a" style="left:1563.5px;top:894px;width:110.0px;height:24px;box-sizing:border-box;background:#fff;border:1px solid #cfcfcf;border-radius:4px"></div>
<svg class="a" style="left:1577px;top:898px" width="16" height="17" fill="none"><path d="M3 5.5v9a1 1 0 0 0 1 1h7.5a1 1 0 0 0 1-1v-9" stroke="#555" stroke-width="1.6"/><path d="M1.5 4h13M6 2h4" stroke="#45b9ea" stroke-width="1.6"/><path d="M6 7v6M9.5 7v6" stroke="#555" stroke-width="1"/></svg>
<div class="t " style="left:1599.0px;top:899.0px;color:#9a9a9a">Отменить</div>
<div class="a" style="left:1679px;top:894px;width:69.5px;height:24px;box-sizing:border-box;background:#fff;border:1px solid #cfcfcf;border-radius:4px"></div>
<svg class="a" style="left:1693px;top:899px" width="16" height="14" fill="none"><path d="M2 7.5l4 5 8.5-11" stroke="#333" stroke-width="1.7"/></svg>
<div class="t " style="left:1715.2px;top:899.0px;">OK</div>
<div class="a" style="left:1753.5px;top:894px;width:101.0px;height:24px;box-sizing:border-box;background:#fff;border:1px solid #cfcfcf;border-radius:4px"></div>
<svg class="a" style="left:1769px;top:899px" width="14" height="14" fill="none"><path d="M1.5 1.5l11 11M12.5 1.5l-11 11" stroke="#333" stroke-width="1.7"/></svg>
<div class="t " style="left:1789.7px;top:899.0px;">Закрыть</div>
</body></html>
